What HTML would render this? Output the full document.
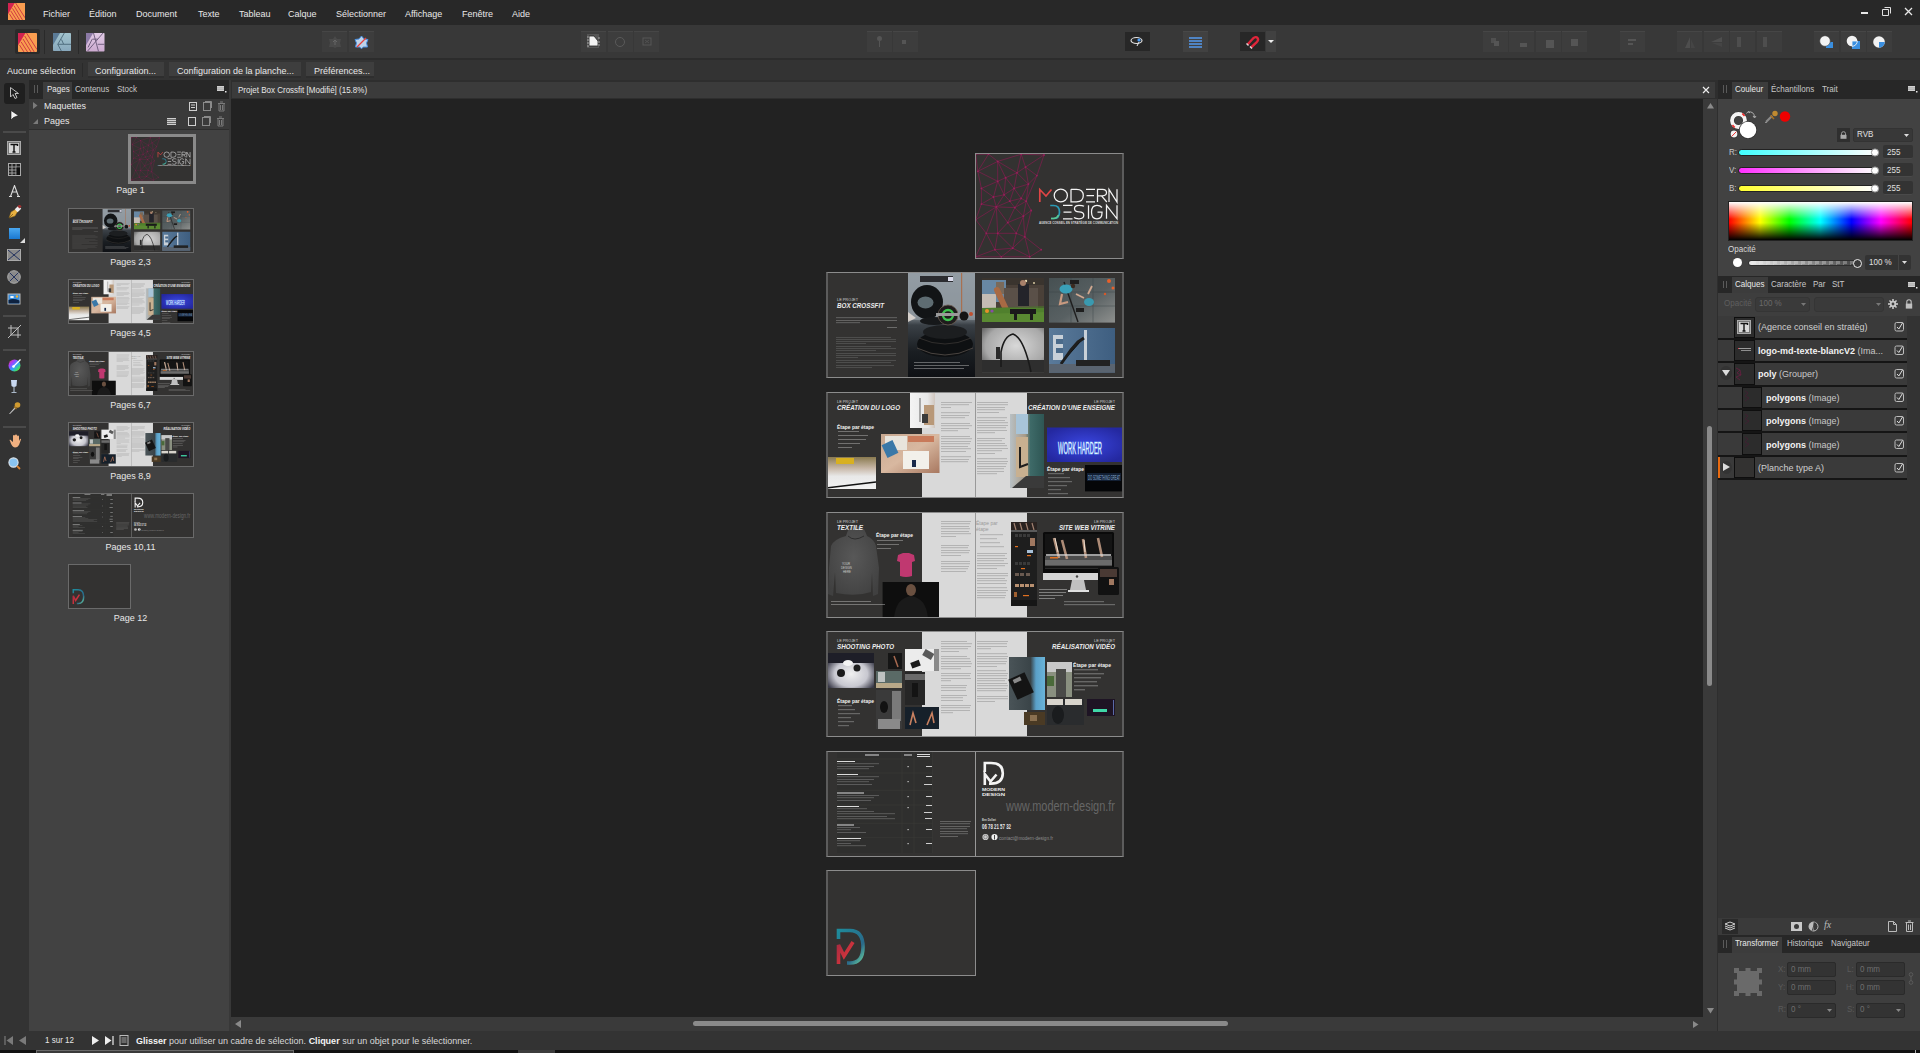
<!DOCTYPE html>
<html><head><meta charset="utf-8">
<style>
*{margin:0;padding:0;box-sizing:border-box}
html,body{width:1920px;height:1053px;overflow:hidden;background:#2e2e2e;font-family:"Liberation Sans",sans-serif;color:#e6e6e6;font-size:9px}
.a{position:absolute}
.t{position:absolute;white-space:nowrap;line-height:1}
</style></head><body>
<!-- MENUBAR -->
<div class="a" style="left:0;top:0;width:1920px;height:25px;background:#282828"></div>
<svg class="a" style="left:8px;top:3px" width="17" height="17" viewBox="0 0 19 19"><rect width="19" height="19" fill="#f99d50"/><path d="M0 0H7.5L0 12.5Z" fill="#d32350"/><path d="M8.5 0L19 16.5M6.7 3L16.2 19M5 6L13 19M3.2 9L9.6 19M1.5 12L6 19" stroke="#cc3040" stroke-width="1"/></svg>
<div class="t" style="left:43px;top:9.5px;font-size:9px;color:#e8e8e8">Fichier</div>
<div class="t" style="left:89px;top:9.5px;font-size:9px;color:#e8e8e8">Édition</div>
<div class="t" style="left:136px;top:9.5px;font-size:9px;color:#e8e8e8">Document</div>
<div class="t" style="left:198px;top:9.5px;font-size:9px;color:#e8e8e8">Texte</div>
<div class="t" style="left:239px;top:9.5px;font-size:9px;color:#e8e8e8">Tableau</div>
<div class="t" style="left:288px;top:9.5px;font-size:9px;color:#e8e8e8">Calque</div>
<div class="t" style="left:336px;top:9.5px;font-size:9px;color:#e8e8e8">Sélectionner</div>
<div class="t" style="left:405px;top:9.5px;font-size:9px;color:#e8e8e8">Affichage</div>
<div class="t" style="left:462px;top:9.5px;font-size:9px;color:#e8e8e8">Fenêtre</div>
<div class="t" style="left:512px;top:9.5px;font-size:9px;color:#e8e8e8">Aide</div>
<div class="a" style="left:1861px;top:12px;width:7px;height:2px;background:#e8e8e8"></div>
<svg class="a" style="left:1882px;top:7px" width="9" height="9" viewBox="0 0 9 9"><path d="M2.5 .5H8.5V6.5M.5 2.5H6.5V8.5H.5Z" fill="none" stroke="#e0e0e0"/></svg>
<svg class="a" style="left:1904px;top:7px" width="9" height="9" viewBox="0 0 9 9"><path d="M1 1L8 8M8 1L1 8" stroke="#e8e8e8" stroke-width="1.3"/></svg>
<!-- TOOLBAR -->
<div class="a" style="left:0;top:25px;width:1920px;height:35px;background:#383838;border-bottom:2px solid #2c2c2c"></div>
<div class="a" style="left:15px;top:29px;width:25px;height:25px;background:#2a2a2a;border-radius:2px"></div>
<svg class="a" style="left:18px;top:33px" width="19" height="19" viewBox="0 0 19 19"><rect width="19" height="19" rx=".8" fill="#f99d50"/><path d="M0 0H7.5L0 12.5Z" fill="#d32350"/><path d="M8.5 0L19 16.5M6.7 3L16.2 19M5 6L13 19M3.2 9L9.6 19M1.5 12L6 19" stroke="#cc3040" stroke-width=".9"/></svg>
<div class="a" style="left:44px;top:30px;width:1px;height:24px;background:#2a2a2a"></div>
<svg class="a" style="left:52.5px;top:33px" width="18" height="18" viewBox="0 0 18 18"><defs><linearGradient id="dg" x1="0" y1="0" x2="0" y2="1"><stop offset="0" stop-color="#a2c4ce"/><stop offset="1" stop-color="#88a8bc"/></linearGradient></defs><rect width="18" height="18" rx=".8" fill="url(#dg)"/><path d="M0 0H7L0 12Z" fill="#5b7b97"/><path d="M11.3 0L4.8 11.3L8.3 18M8.5 6.5L10.5 11M4.8 11.3H18" stroke="#4a6878" stroke-width=".9" fill="none"/></svg>
<div class="a" style="left:78px;top:30px;width:1px;height:24px;background:#2a2a2a"></div>
<svg class="a" style="left:86px;top:33px" width="18.5" height="18.5" viewBox="0 0 18 18"><defs><linearGradient id="pg" x1="0" y1="0" x2="0" y2="1"><stop offset="0" stop-color="#e2cce6"/><stop offset="1" stop-color="#ccaad0"/></linearGradient></defs><rect width="18" height="18" rx=".8" fill="url(#pg)"/><path d="M0 0H7L0 12Z" fill="#8c7aa6"/><path d="M7.3 0L12.2 18M16.6 0L1.6 17.5M6.3 6H11.5M11.3 11H18M2 14L6 6" stroke="#6a5a7a" stroke-width=".9" fill="none"/></svg>
<div class="a" style="left:322px;top:31px;width:25px;height:21px;background:#3d3d3d;border-top:1px solid #464646"></div>
<div class="a" style="left:349px;top:31px;width:25px;height:21px;background:#3d3d3d;border-top:1px solid #464646"></div>
<svg class="a" style="left:328px;top:35px" width="14" height="14" viewBox="0 0 14 14"><path d="M7 1L9 4L13 4L12 8L13 12L9 12L7 13L5 12L1 12L2 8L1 4L5 4Z" fill="#4a4a4a"/><path d="M7 5V10M5 7L7 5L9 7" stroke="#666" stroke-width="1" fill="none"/></svg>
<svg class="a" style="left:354px;top:35px" width="15" height="14" viewBox="0 0 15 14"><path d="M7.5 1L10 4L14 4.5L12.5 8L13.5 12L9.5 12L7.5 13.5L5.5 12L1.5 12L2.5 8L1 4.5L5 4Z" fill="#bdd3ea" stroke="#4a90e2" stroke-width="1"/><path d="M3 12L12 3" stroke="#e8403a" stroke-width="1.3"/></svg>
<!-- group 2 -->
<div class="a" style="left:581px;top:31px;width:25px;height:21px;background:#3d3d3d;border-top:1px solid #464646"></div>
<div class="a" style="left:608px;top:31px;width:25px;height:21px;background:#3d3d3d;border-top:1px solid #464646"></div>
<div class="a" style="left:634px;top:31px;width:25px;height:21px;background:#3d3d3d;border-top:1px solid #464646"></div>
<svg class="a" style="left:587px;top:34px" width="14" height="15" viewBox="0 0 14 15"><rect x="0" y="0" width="12" height="14" fill="#555"/><path d="M2 2H7L11 7V12H2Z" fill="#f2f2f2" stroke="#222" stroke-width=".8"/><path d="M0 3H2M0 6H2M0 9H2M0 12H2M11 4H13M11 8H13M11 11H13" stroke="#bbb" stroke-width=".8"/></svg>
<svg class="a" style="left:613px;top:35px" width="14" height="14" viewBox="0 0 14 14"><circle cx="7" cy="7" r="4.5" fill="none" stroke="#5a5a5a" stroke-width="1"/></svg>
<svg class="a" style="left:642px;top:37px" width="10" height="10" viewBox="0 0 10 10"><rect x="1" y="1" width="8" height="7" fill="none" stroke="#575757"/><path d="M3 3L7 6M7 3L3 6" stroke="#575757" stroke-width=".8"/></svg>
<div class="a" style="left:867px;top:31px;width:25px;height:21px;background:#3d3d3d;border-top:1px solid #464646"></div>
<div class="a" style="left:893px;top:31px;width:25px;height:21px;background:#3d3d3d;border-top:1px solid #464646"></div>
<svg class="a" style="left:875px;top:35px" width="9" height="13" viewBox="0 0 9 13"><circle cx="4.5" cy="3.5" r="2.5" fill="#555"/><path d="M4.5 6V12" stroke="#555" stroke-width="1"/></svg>
<div class="a" style="left:902px;top:40px;width:4px;height:4px;background:#555"></div>
<!-- group 3 -->
<div class="a" style="left:1125px;top:32px;width:25px;height:19px;background:#272727"></div>
<svg class="a" style="left:1130px;top:36px" width="15" height="11" viewBox="0 0 15 11"><ellipse cx="6.5" cy="4.5" rx="5.5" ry="3" fill="none" stroke="#e6e6e6" stroke-width="1.1"/><circle cx="9" cy="4" r="1.6" fill="#4aa0ff"/><path d="M7 10L9 6" stroke="#e6e6e6" stroke-width="1"/></svg>
<div class="a" style="left:1183px;top:31px;width:25px;height:21px;background:#414141;border-top:1px solid #484848"></div>
<div class="a" style="left:1189px;top:37px;width:13px;height:2px;background:#4f84c4"></div>
<div class="a" style="left:1189px;top:40px;width:13px;height:2px;background:#4f84c4"></div>
<div class="a" style="left:1189px;top:43px;width:13px;height:2px;background:#4f84c4"></div>
<div class="a" style="left:1189px;top:46px;width:13px;height:2px;background:#4f84c4"></div>
<div class="a" style="left:1240px;top:32px;width:25px;height:19px;background:#272727"></div>
<svg class="a" style="left:1245px;top:35px" width="15" height="14" viewBox="0 0 15 14"><path d="M2.5 9.5L8 3.5Q11 1 12.5 3Q14 5 11.5 7.5L6 12.5" fill="none" stroke="#e0253a" stroke-width="2.4"/><path d="M1.5 8.5L3.5 10.5M5 11.5L7 13.5" stroke="#ddd" stroke-width="1.4"/></svg>
<div class="a" style="left:1266px;top:31px;width:10px;height:21px;background:#414141"></div>
<svg class="a" style="left:1268px;top:40px" width="6" height="4" viewBox="0 0 6 4"><path d="M0 0H6L3 3Z" fill="#eee"/></svg>
<!-- group 4 -->
<div class="a" style="left:1483px;top:31px;width:25px;height:21px;background:#3d3d3d;border-top:1px solid #464646"></div>
<div class="a" style="left:1509px;top:31px;width:25px;height:21px;background:#3d3d3d;border-top:1px solid #464646"></div>
<div class="a" style="left:1536px;top:31px;width:25px;height:21px;background:#3d3d3d;border-top:1px solid #464646"></div>
<div class="a" style="left:1562px;top:31px;width:25px;height:21px;background:#3d3d3d;border-top:1px solid #464646"></div>
<div class="a" style="left:1491px;top:38px;width:5px;height:5px;background:#505050"></div>
<div class="a" style="left:1494px;top:41px;width:5px;height:5px;background:#555"></div>
<div class="a" style="left:1520px;top:43px;width:7px;height:4px;background:#555"></div>
<div class="a" style="left:1546px;top:40px;width:8px;height:8px;background:#555"></div>
<div class="a" style="left:1571px;top:39px;width:7px;height:7px;background:#555"></div>
<div class="a" style="left:1620px;top:31px;width:25px;height:21px;background:#3d3d3d;border-top:1px solid #464646"></div>
<div class="a" style="left:1628px;top:39px;width:8px;height:2px;background:#555"></div>
<div class="a" style="left:1628px;top:43px;width:5px;height:2px;background:#555"></div>
<div class="a" style="left:1677px;top:31px;width:25px;height:21px;background:#3d3d3d;border-top:1px solid #464646"></div>
<div class="a" style="left:1704px;top:31px;width:25px;height:21px;background:#3d3d3d;border-top:1px solid #464646"></div>
<div class="a" style="left:1730px;top:31px;width:25px;height:21px;background:#3d3d3d;border-top:1px solid #464646"></div>
<div class="a" style="left:1757px;top:31px;width:25px;height:21px;background:#3d3d3d;border-top:1px solid #464646"></div>
<svg class="a" style="left:1684px;top:36px" width="12" height="13" viewBox="0 0 12 13"><path d="M6 1V12H1Z" fill="#4e4e4e"/><path d="M7 3L11 12H7Z" fill="#454545"/></svg>
<svg class="a" style="left:1710px;top:36px" width="13" height="12" viewBox="0 0 13 12"><path d="M12 1V6H1Z" fill="#4e4e4e"/><path d="M12 7V11L2 7Z" fill="#454545"/></svg>
<div class="a" style="left:1737px;top:37px;width:4px;height:10px;background:#4e4e4e"></div>
<div class="a" style="left:1763px;top:37px;width:4px;height:10px;background:#4e4e4e"></div>
<div class="a" style="left:1814px;top:31px;width:25px;height:21px;background:#3d3d3d;border-top:1px solid #464646"></div>
<div class="a" style="left:1841px;top:31px;width:25px;height:21px;background:#3d3d3d;border-top:1px solid #464646"></div>
<div class="a" style="left:1867px;top:31px;width:25px;height:21px;background:#3d3d3d;border-top:1px solid #464646"></div>
<svg class="a" style="left:1819px;top:35px" width="15" height="14" viewBox="0 0 15 14"><path d="M9 7H14V13H7V10" fill="#3a8fe0"/><circle cx="6" cy="6" r="5.3" fill="#f2f2f2" stroke="#3d3d3d" stroke-width=".6"/></svg>
<svg class="a" style="left:1846px;top:35px" width="15" height="14" viewBox="0 0 15 14"><rect x="6" y="6" width="8" height="8" fill="#3a8fe0"/><circle cx="6" cy="6" r="5.3" fill="#f2f2f2"/><path d="M6 6H11.3A5.3 5.3 0 0 1 6 11.3Z" fill="#3a8fe0" stroke="#f2f2f2" stroke-width=".8"/></svg>
<svg class="a" style="left:1872px;top:35px" width="15" height="14" viewBox="0 0 15 14"><circle cx="7" cy="7" r="5.8" fill="#f2f2f2"/><path d="M7 7H12.8A5.8 5.8 0 0 1 7 12.8Z" fill="#3a8fe0"/></svg>
<!-- CONTEXT BAR -->
<div class="a" style="left:0;top:60px;width:1920px;height:20px;background:#333333"></div>
<div class="t" style="left:7px;top:67px;font-size:9px;color:#e8e8e8">Aucune sélection</div>
<div class="a" style="left:82px;top:63px;width:1px;height:14px;background:#2a2a2a"></div>
<div class="a" style="left:88px;top:62px;width:76px;height:16px;background:#3e3e3e;border-bottom:2px solid #2e2e2e"></div>
<div class="t" style="left:95px;top:67px;font-size:9px;color:#e8e8e8">Configuration...</div>
<div class="a" style="left:169px;top:62px;width:132px;height:16px;background:#3e3e3e;border-bottom:2px solid #2e2e2e"></div>
<div class="t" style="left:177px;top:67px;font-size:9px;color:#e8e8e8">Configuration de la planche...</div>
<div class="a" style="left:306px;top:62px;width:68px;height:16px;background:#3e3e3e;border-bottom:2px solid #2e2e2e"></div>
<div class="t" style="left:314px;top:67px;font-size:9px;color:#e8e8e8">Préférences...</div>
<!-- LEFT TOOLS -->
<div class="a" style="left:0;top:80px;width:29px;height:951px;background:#333333"></div>
<div class="a" style="left:4px;top:83px;width:21px;height:21px;background:#1f1f1f;border-radius:3px"></div>
<svg class="a" style="left:9px;top:86px" width="11" height="14" viewBox="0 0 11 14"><path d="M1.5 1.5V11L4 8.5L6 12.5L8 11.5L6 7.5H9.5Z" fill="#1f1f1f" stroke="#bdbdbd" stroke-width="1"/></svg>
<svg class="a" style="left:10px;top:110px" width="9" height="11" viewBox="0 0 9 11"><path d="M1 .5V10L3.5 7.5L8.5 5.5Z" fill="#f2f2f2" stroke="#111" stroke-width=".6"/></svg>
<div class="a" style="left:3px;top:131px;width:23px;height:2px;background:#4a4a4a"></div>
<svg class="a" style="left:7px;top:141px" width="14" height="14" viewBox="0 0 14 14"><rect x=".5" y=".5" width="13" height="13" fill="#777" stroke="#aaa"/><rect x="2" y="2" width="10" height="10" fill="#d8d8d8"/><path d="M3.5 3.5H10.5V5M7 3.5V11M5.5 11H8.5" stroke="#111" stroke-width="1.4" fill="none"/></svg>
<svg class="a" style="left:8px;top:163px" width="13" height="13" viewBox="0 0 13 13"><rect x=".5" y=".5" width="12" height="12" fill="#222" stroke="#aaa"/><path d="M.5 4H12.5M.5 7H12.5M.5 10H12.5M4 .5V12.5M8 .5V12.5" stroke="#aaa" stroke-width=".9"/><rect x="8.5" y="4.5" width="3.5" height="7.5" fill="#111"/></svg>
<svg class="a" style="left:8px;top:185px" width="13" height="12" viewBox="0 0 13 12"><path d="M1 11.5H4M9 11.5H12M2.5 11.5L6.5 .5L10.5 11.5M4.3 7H8.7" stroke="#dcdcdc" stroke-width="1.1" fill="none"/></svg>
<svg class="a" style="left:8px;top:205px" width="14" height="14" viewBox="0 0 14 14"><path d="M1 13L3 7L8 4L10 6L7 11Z" fill="#e8b040" stroke="#8a6a20" stroke-width=".5"/><path d="M1 13L5 9" stroke="#5a4010" stroke-width=".6"/><rect x="8" y="1.5" width="4" height="5" fill="#eee" transform="rotate(45 10 4)"/><rect x="10" y="0" width="3" height="3" fill="#a03030" transform="rotate(45 11.5 1.5)"/></svg>
<div class="a" style="left:9px;top:228px;width:11px;height:11px;background:linear-gradient(#4aa8f0,#1a78d0)"></div>
<svg class="a" style="left:20px;top:238px" width="5" height="5" viewBox="0 0 5 5"><path d="M0 5L5 0V5Z" fill="#ddd"/></svg>
<svg class="a" style="left:7px;top:249px" width="14" height="12" viewBox="0 0 14 12"><rect x=".5" y=".5" width="13" height="11" fill="#8a8a8a" stroke="#aaa"/><path d="M1 1L13 11M13 1L1 11" stroke="#1a2a5a" stroke-width=".9"/></svg>
<svg class="a" style="left:7px;top:270px" width="14" height="14" viewBox="0 0 14 14"><circle cx="7" cy="7" r="6.3" fill="#8a8a8a" stroke="#aaa"/><path d="M2.5 2.5L11.5 11.5M11.5 2.5L2.5 11.5" stroke="#1a2a5a" stroke-width=".9"/></svg>
<svg class="a" style="left:7px;top:293px" width="14" height="12" viewBox="0 0 14 12"><rect x=".5" y=".5" width="13" height="11" fill="#b8b8b8"/><rect x="1.5" y="1.5" width="11" height="9" fill="#3a90e0"/><path d="M1.5 7Q6 5 12.5 7.5V10.5H1.5Z" fill="#0e2240"/><circle cx="10" cy="3.5" r="1.2" fill="#f0b030"/><ellipse cx="5" cy="4" rx="2" ry="1" fill="#fff"/></svg>
<div class="a" style="left:3px;top:315px;width:23px;height:2px;background:#4a4a4a"></div>
<svg class="a" style="left:8px;top:325px" width="13" height="13" viewBox="0 0 13 13"><path d="M3 0V10H13M0 3H10V13M0 13L13 0" stroke="#bdbdbd" stroke-width="1" fill="none"/></svg>
<div class="a" style="left:3px;top:349px;width:23px;height:2px;background:#4a4a4a"></div>
<svg class="a" style="left:8px;top:358px" width="14" height="14" viewBox="0 0 14 14"><defs><linearGradient id="cw1" x1="0" y1="0" x2="1" y2="1"><stop offset="0" stop-color="#ff3a6a"/><stop offset=".3" stop-color="#a040ff"/><stop offset=".55" stop-color="#30a0ff"/><stop offset=".8" stop-color="#40e060"/><stop offset="1" stop-color="#ffd040"/></linearGradient></defs><circle cx="6.5" cy="7.5" r="6" fill="url(#cw1)"/><path d="M5 9L12.5 1.5" stroke="#fff" stroke-width="1.2"/><circle cx="5.5" cy="8.5" r="1.3" fill="#fff"/></svg>
<svg class="a" style="left:10px;top:379px" width="8" height="15" viewBox="0 0 8 15"><path d="M1 1H7L6.5 7Q4 9 1.5 7Z" fill="#c8d8f0"/><path d="M4 8V13M1.5 13.5H6.5" stroke="#aab8c8" stroke-width="1.1"/></svg>
<svg class="a" style="left:8px;top:401px" width="13" height="14" viewBox="0 0 13 14"><path d="M1 13L7 6L8 7L2 13Z" fill="#c8c8c8"/><circle cx="9.5" cy="4" r="2.8" fill="#d09a30"/><path d="M6 5.5L8.5 8" stroke="#a07020" stroke-width="1.5"/></svg>
<div class="a" style="left:3px;top:426px;width:23px;height:2px;background:#4a4a4a"></div>
<svg class="a" style="left:8px;top:434px" width="13" height="14" viewBox="0 0 13 14"><path d="M2 7Q1 6 2 5.5L5 8V2Q5 1 6 1Q7 1 7 2V6V1.5Q7 .5 8 .5Q9 .5 9 1.5V6V2.5Q9 1.5 10 1.5Q11 1.5 11 2.5V7L12 5Q12.8 4.5 13 5.5L11 11Q9.5 13.5 7 13.5Q4 13.5 2 7Z" fill="#f0b080"/></svg>
<svg class="a" style="left:8px;top:457px" width="13" height="13" viewBox="0 0 13 13"><circle cx="5.5" cy="5.5" r="4.6" fill="#8ac4f0" stroke="#e0e8f0" stroke-width="1.1"/><path d="M9 9L12 12" stroke="#d88030" stroke-width="1.8"/></svg>

<!-- LEFT PANEL -->
<div class="a" style="left:29px;top:80px;width:201px;height:19px;background:#272727"></div>
<div class="a" style="left:34px;top:85px;width:1px;height:8px;background:#5a5a5a"></div>
<div class="a" style="left:37px;top:85px;width:1px;height:8px;background:#5a5a5a"></div>
<div class="a" style="left:43px;top:82px;width:29px;height:17px;background:#3c3c3c"></div>
<div class="t" style="left:47px;top:85px;font-size:9px;transform:scaleX(.89);transform-origin:0 0;color:#e8e8e8">Pages</div>
<div class="t" style="left:75px;top:85px;font-size:9px;transform:scaleX(.89);transform-origin:0 0;color:#c8c8c8">Contenus</div>
<div class="t" style="left:117px;top:85px;font-size:9px;transform:scaleX(.89);transform-origin:0 0;color:#c8c8c8">Stock</div>
<svg class="a" style="left:217px;top:85px" width="10" height="8" viewBox="0 0 10 8"><rect x="0" y="1" width="7" height="5" fill="#d0d0d0"/><path d="M0 2.8H7M0 4.3H7" stroke="#8a8a8a" stroke-width=".5"/><rect x="8" y="6" width="1.5" height="1.5" fill="#e8e8e8"/></svg>
<div class="a" style="left:29px;top:99px;width:201px;height:31px;background:#3a3a3a"></div>
<div class="a" style="left:29px;top:129px;width:201px;height:1px;background:#2e2e2e"></div>
<svg class="a" style="left:33px;top:102px" width="5" height="7" viewBox="0 0 5 7"><path d="M0 0L4.5 3.5L0 7Z" fill="#7a7a7a"/></svg>
<svg class="a" style="left:33px;top:119px" width="5" height="5" viewBox="0 0 5 5"><path d="M5 0V5H0Z" fill="#7a7a7a"/></svg>
<div class="t" style="left:44px;top:102px;font-size:9px;color:#e8e8e8">Maquettes</div>
<div class="t" style="left:44px;top:117px;font-size:9px;color:#e8e8e8">Pages</div>
<svg class="a" style="left:188px;top:100px" width="40" height="13" viewBox="0 0 40 13"><rect x="1.5" y="2.5" width="7" height="8" fill="none" stroke="#cfcfcf"/><path d="M3 5H7M3 7.5H7" stroke="#cfcfcf"/><rect x="15.5" y="2.5" width="7" height="8" fill="none" stroke="#8a8a8a"/><path d="M17 1.5H23.5V8" stroke="#8a8a8a" fill="none"/><path d="M30 3.5H37M31 4V11H36V4M32 2H35M32.5 5V10M34.5 5V10" stroke="#7a7a7a" fill="none"/></svg>
<svg class="a" style="left:166px;top:115px" width="61" height="13" viewBox="0 0 61 13"><rect x="1" y="3" width="9" height="7" fill="#cfcfcf"/><path d="M1 4.5H10M1 6.5H10M1 8.5H10" stroke="#444" stroke-width=".7"/><rect x="22.5" y="2.5" width="7" height="8" fill="none" stroke="#cfcfcf"/><rect x="36.5" y="2.5" width="7" height="8" fill="none" stroke="#8a8a8a"/><path d="M38 1.5H44.5V8" stroke="#8a8a8a" fill="none"/><path d="M51 3.5H58M52 4V11H57V4M53 2H56M53.5 5V10M55.5 5V10" stroke="#7a7a7a" fill="none"/></svg>
<div class="a" style="left:29px;top:130px;width:200px;height:901px;background:#424242"></div>
<div class="a" style="left:229px;top:80px;width:2px;height:951px;background:#383838"></div>
<!-- thumbnails -->
<div class="a" style="left:128px;top:134px;width:68px;height:50px;border:3px solid #8a8a8a;background:#333231"></div>
<svg class="a" style="left:131px;top:137px" width="62" height="44" viewBox="0 0 149 106" preserveAspectRatio="none"><use href="#p1" width="149" height="106"/></svg>
<div class="t" style="left:80.5px;width:100px;text-align:center;top:186px;font-size:9px;color:#e8e8e8">Page 1</div>
<svg class="a" style="left:68px;top:208px" width="126" height="45" viewBox="0 0 298 106" preserveAspectRatio="none"><use href="#s23" width="298" height="106"/></svg>
<div class="a" style="left:68px;top:208px;width:126px;height:45px;border:1px solid #6a6a6a"></div>
<div class="t" style="left:80.5px;width:100px;text-align:center;top:258px;font-size:9px;color:#e8e8e8">Pages 2,3</div>
<svg class="a" style="left:68px;top:279px" width="126" height="45" viewBox="0 0 298 106" preserveAspectRatio="none"><use href="#s45" width="298" height="106"/></svg>
<div class="a" style="left:68px;top:279px;width:126px;height:45px;border:1px solid #6a6a6a"></div>
<div class="t" style="left:80.5px;width:100px;text-align:center;top:329px;font-size:9px;color:#e8e8e8">Pages 4,5</div>
<svg class="a" style="left:68px;top:351px" width="126" height="45" viewBox="0 0 298 106" preserveAspectRatio="none"><use href="#s67" width="298" height="106"/></svg>
<div class="a" style="left:68px;top:351px;width:126px;height:45px;border:1px solid #6a6a6a"></div>
<div class="t" style="left:80.5px;width:100px;text-align:center;top:401px;font-size:9px;color:#e8e8e8">Pages 6,7</div>
<svg class="a" style="left:68px;top:422px" width="126" height="45" viewBox="0 0 298 106" preserveAspectRatio="none"><use href="#s89" width="298" height="106"/></svg>
<div class="a" style="left:68px;top:422px;width:126px;height:45px;border:1px solid #6a6a6a"></div>
<div class="t" style="left:80.5px;width:100px;text-align:center;top:472px;font-size:9px;color:#e8e8e8">Pages 8,9</div>
<svg class="a" style="left:68px;top:493px" width="126" height="45" viewBox="0 0 298 106" preserveAspectRatio="none"><use href="#s1011" width="298" height="106"/></svg>
<div class="a" style="left:68px;top:493px;width:126px;height:45px;border:1px solid #6a6a6a"></div>
<div class="t" style="left:80.5px;width:100px;text-align:center;top:543px;font-size:9px;color:#e8e8e8">Pages 10,11</div>
<svg class="a" style="left:68px;top:564px" width="63" height="45" viewBox="0 0 149 106" preserveAspectRatio="none"><use href="#p12" width="149" height="106"/></svg>
<div class="a" style="left:68px;top:564px;width:63px;height:45px;border:1px solid #6a6a6a"></div>
<div class="t" style="left:80.5px;width:100px;text-align:center;top:614px;font-size:9px;color:#e8e8e8">Page 12</div>
<!-- CANVAS AREA -->
<div class="a" style="left:231px;top:81px;width:1485px;height:18px;background:#2e2e2e"></div>
<div class="a" style="left:232px;top:82px;width:1483px;height:16px;background:#3b3b3b"></div>
<div class="t" style="left:238px;top:86px;font-size:9px;transform:scaleX(.89);transform-origin:0 0;color:#e6e6e6">Projet Box Crossfit [Modifié] (15.8%)</div>
<svg class="a" style="left:1702px;top:86px" width="8" height="8" viewBox="0 0 8 8"><path d="M1 1L7 7M7 1L1 7" stroke="#eee" stroke-width="1.2"/></svg>
<div class="a" style="left:231px;top:99px;width:1472px;height:918px;background:#222222"></div>
<!-- vertical scrollbar -->
<div class="a" style="left:1703px;top:99px;width:14px;height:918px;background:#3a3a3a"></div>
<svg class="a" style="left:1707px;top:103px" width="7" height="6" viewBox="0 0 7 6"><path d="M0 5.5L3.5 0L7 5.5Z" fill="#8a8a8a"/></svg>
<svg class="a" style="left:1707px;top:1008px" width="7" height="6" viewBox="0 0 7 6"><path d="M0 0L3.5 5.5L7 0Z" fill="#8a8a8a"/></svg>
<div class="a" style="left:1707px;top:426px;width:5px;height:260px;background:#8a8a8a;border-radius:3px"></div>
<!-- horizontal scrollbar -->
<div class="a" style="left:231px;top:1017px;width:1486px;height:14px;background:#3a3a3a"></div>
<svg class="a" style="left:235px;top:1020px" width="6" height="8" viewBox="0 0 6 8"><path d="M6 0L0 4L6 8Z" fill="#8a8a8a"/></svg>
<svg class="a" style="left:1693px;top:1021px" width="6" height="7" viewBox="0 0 6 7"><path d="M0 0L5.5 3.5L0 7Z" fill="#8a8a8a"/></svg>
<div class="a" style="left:693px;top:1021px;width:535px;height:5px;background:#8a8a8a;border-radius:3px"></div>


<svg width="0" height="0" style="position:absolute">
<defs>
<linearGradient id="gTire" x1="0" y1="0" x2="0" y2="1"><stop offset="0" stop-color="#8a949c"/><stop offset=".42" stop-color="#7a8288"/><stop offset=".5" stop-color="#3a4046"/><stop offset=".75" stop-color="#1a1e22"/><stop offset="1" stop-color="#0e1014"/></linearGradient>
<linearGradient id="gSled" x1="0" y1="0" x2="0" y2="1"><stop offset="0" stop-color="#6a7078"/><stop offset=".55" stop-color="#6a5a48"/><stop offset=".7" stop-color="#4d6a30"/><stop offset="1" stop-color="#3e5a22"/></linearGradient>
<linearGradient id="gFloor" x1="0" y1="0" x2="1" y2="1"><stop offset="0" stop-color="#465052"/><stop offset=".55" stop-color="#586062"/><stop offset="1" stop-color="#8e908e"/></linearGradient>
<radialGradient id="gRope" cx=".55" cy=".4" r=".7"><stop offset="0" stop-color="#d8d8d8"/><stop offset=".7" stop-color="#a8a8a8"/><stop offset="1" stop-color="#5a5a5a"/></radialGradient>
<linearGradient id="gBlue" x1="0" y1="0" x2="1" y2="0"><stop offset="0" stop-color="#5a7a9a"/><stop offset="1" stop-color="#3e5e80"/></linearGradient>
<linearGradient id="gLamp" x1="0" y1="0" x2="1" y2="0"><stop offset="0" stop-color="#f4f4f4"/><stop offset=".7" stop-color="#e8e8e8"/><stop offset="1" stop-color="#d0c6be"/></linearGradient>
<linearGradient id="gDesk" x1="0" y1="0" x2="1" y2="1"><stop offset="0" stop-color="#c8a890"/><stop offset=".5" stop-color="#d8b8a0"/><stop offset="1" stop-color="#a87860"/></linearGradient>
<linearGradient id="gHand" x1="0" y1="0" x2="0" y2="1"><stop offset="0" stop-color="#8a7a50"/><stop offset=".35" stop-color="#c8b8a8"/><stop offset=".6" stop-color="#e8e8e8"/><stop offset="1" stop-color="#f2f2f2"/></linearGradient>
<linearGradient id="gAlley" x1="0" y1="0" x2="1" y2="0"><stop offset="0" stop-color="#b8c0c4"/><stop offset=".45" stop-color="#a89a86"/><stop offset=".6" stop-color="#3e6a68"/><stop offset="1" stop-color="#2e5654"/></linearGradient>
<radialGradient id="gNeon" cx=".5" cy=".5" r=".6"><stop offset="0" stop-color="#3a46e0"/><stop offset="1" stop-color="#2428a0"/></radialGradient>
<radialGradient id="gHood" cx=".5" cy=".45" r=".65"><stop offset="0" stop-color="#585858"/><stop offset="1" stop-color="#404040"/></radialGradient>
<radialGradient id="gStudio" cx=".5" cy=".6" r=".6"><stop offset="0" stop-color="#f0f0f0"/><stop offset=".6" stop-color="#c8c8d0"/><stop offset="1" stop-color="#3a3a48"/></radialGradient>
<linearGradient id="gCam" x1="0" y1="0" x2="1" y2="0"><stop offset="0" stop-color="#4a5458"/><stop offset=".6" stop-color="#3a4448"/><stop offset=".75" stop-color="#5aa0c8"/><stop offset="1" stop-color="#6ab4d8"/></linearGradient>
<linearGradient id="gLogoD" x1="0" y1="0" x2="1" y2="1"><stop offset="0" stop-color="#1e8a9a"/><stop offset=".7" stop-color="#2a6a8a"/><stop offset="1" stop-color="#6ad0a0"/></linearGradient>
<linearGradient id="gLogoM" x1="0" y1="0" x2="1" y2="1"><stop offset="0" stop-color="#a82a40"/><stop offset="1" stop-color="#e83a3a"/></linearGradient>

<symbol id="p1" viewBox="0 0 149 106">
<rect width="149" height="106" fill="#333231"/>
<path d="M19.9 96.7L26.3 103.8M11.3 80.3L19.9 96.7M21.3 53.9L11.3 80.3M29.1 41.8L21.3 53.9M2.8 18.3L13.5 1.2M21.3 53.9L34.8 48.2M39.1 35.4L53.4 31.1M22.7 8.4L22.7 28.3M42.0 19.8L50.5 14.1M22.7 80.3L37.7 95.2M2.8 18.3L6.4 35.4M34.8 48.2L46.2 45.4M22.7 28.3L18.5 44.0M49.8 83.8L37.7 95.2M39.8 54.6L32.7 69.6M48.4 63.2L41.3 80.3M37.7 95.2L54.8 103.8M34.8 48.2L39.8 54.6M46.2 45.4L51.2 48.2M49.8 83.8L54.8 103.8M18.5 44.0L6.4 51.1M11.3 80.3L22.7 80.3M22.7 8.4L42.0 19.8M6.4 51.1L21.3 53.9M22.7 80.3L41.3 80.3M21.3 53.9L32.7 69.6M39.1 35.4L46.2 45.4M56.2 57.5L48.4 63.2M53.4 31.1L51.2 48.2M41.3 80.3L49.8 83.8M53.4 31.1L61.9 22.6M2.8 18.3L0.7 1.2M48.4 63.2L32.7 69.6M22.7 80.3L19.9 96.7M21.3 53.9L22.7 80.3M6.4 35.4L6.4 51.1M2.8 18.3L22.7 28.3M42.0 19.8L46.2 1.2M26.3 103.8L0.7 103.8M22.7 28.3L29.1 41.8M19.9 96.7L37.7 95.2M30.6 24.7L22.7 28.3M50.5 14.1L46.2 1.2M51.2 48.2L39.8 54.6M49.8 83.8L66.2 96.7M30.6 24.7L39.1 35.4M69.0 2.0L46.2 1.2M48.4 63.2L49.8 83.8M32.7 69.6L41.3 80.3M21.3 53.9L39.8 54.6M51.2 48.2L48.4 63.2M50.5 14.1L61.9 22.6M11.3 80.3L0.7 66.7M37.7 95.2L26.3 103.8M42.0 19.8L53.4 31.1M66.2 96.7L54.8 103.8M6.4 51.1L0.7 66.7M18.5 44.0L21.3 53.9M30.6 24.7L29.1 41.8M54.8 103.8L26.3 103.8M50.5 14.1L53.4 31.1M19.9 96.7L0.7 103.8M22.7 8.4L46.2 1.2M42.0 19.8L30.6 24.7M53.4 31.1L46.2 45.4M29.1 41.8L34.8 48.2M22.7 8.4L13.5 1.2M41.3 80.3L37.7 95.2M39.8 54.6L48.4 63.2M6.4 35.4L18.5 44.0M39.1 35.4L29.1 41.8M21.3 53.9L0.7 66.7M0.7 1.2L13.5 1.2M50.5 14.1L69.0 2.0M22.7 8.4L2.8 18.3M11.3 80.3L0.7 103.8M51.2 48.2L61.9 22.6M46.2 45.4L39.8 54.6M32.7 69.6L22.7 80.3M22.7 8.4L30.6 24.7M51.2 48.2L56.2 57.5M39.1 35.4L34.8 48.2M29.1 41.8L18.5 44.0M42.0 19.8L39.1 35.4M56.2 57.5L49.8 83.8M69.0 2.0L61.9 22.6M22.7 28.3L6.4 35.4" stroke="#8a1b51" stroke-width=".65" fill="none"/>
<g fill="#9a1f5c"><circle cx="22.7" cy="8.4" r=".9"/><circle cx="2.8" cy="18.3" r=".9"/><circle cx="42.0" cy="19.8" r=".9"/><circle cx="30.6" cy="24.7" r=".9"/><circle cx="50.5" cy="14.1" r=".9"/><circle cx="69.0" cy="2.0" r=".9"/><circle cx="46.2" cy="1.2" r=".9"/><circle cx="22.7" cy="28.3" r=".9"/><circle cx="6.4" cy="35.4" r=".9"/><circle cx="39.1" cy="35.4" r=".9"/><circle cx="53.4" cy="31.1" r=".9"/><circle cx="29.1" cy="41.8" r=".9"/><circle cx="18.5" cy="44.0" r=".9"/><circle cx="6.4" cy="51.1" r=".9"/><circle cx="21.3" cy="53.9" r=".9"/><circle cx="34.8" cy="48.2" r=".9"/><circle cx="46.2" cy="45.4" r=".9"/><circle cx="51.2" cy="48.2" r=".9"/><circle cx="39.8" cy="54.6" r=".9"/><circle cx="56.2" cy="57.5" r=".9"/><circle cx="48.4" cy="63.2" r=".9"/><circle cx="32.7" cy="69.6" r=".9"/><circle cx="11.3" cy="80.3" r=".9"/><circle cx="22.7" cy="80.3" r=".9"/><circle cx="41.3" cy="80.3" r=".9"/><circle cx="49.8" cy="83.8" r=".9"/><circle cx="19.9" cy="96.7" r=".9"/><circle cx="37.7" cy="95.2" r=".9"/><circle cx="66.2" cy="96.7" r=".9"/><circle cx="54.8" cy="103.8" r=".9"/><circle cx="26.3" cy="103.8" r=".9"/><circle cx="0.7" cy="103.8" r=".9"/><circle cx="0.7" cy="1.2" r=".9"/><circle cx="13.5" cy="1.2" r=".9"/><circle cx="0.7" cy="66.7" r=".9"/><circle cx="61.9" cy="22.6" r=".9"/></g>
<path d="M64.8 49V36.5L71 43L76.5 36.5" stroke="#e04545" stroke-width="1.7" fill="none"/>
<g stroke="#f4f4f4" stroke-width="1.25" fill="none">
<ellipse cx="85.8" cy="42.5" rx="6.6" ry="6.4"/>
<path d="M96 36.3H101.5Q108.3 36.3 108.3 42.6Q108.3 48.8 101.5 48.8H96V36.3"/>
<path d="M111 36.3H120M111.5 42.5H119M111 48.8H120"/>
<path d="M122.5 49V36.3H127.5Q131.5 36.3 131.5 39.6Q131.5 42.8 127.5 42.8H122.5M126.5 42.8L131.8 49"/>
<path d="M134 49V36.3L142 49V36.3"/>
<path d="M88 52.3H97.5M88.5 59H96.5M88 65.8H97.5"/>
<path d="M109 53.3Q107.5 52.3 104 52.3Q99.5 52.3 99.5 55.6Q99.5 58.9 104 58.9Q108.8 58.9 108.8 62.3Q108.8 65.8 104 65.8Q100.5 65.8 99 64.5"/>
<path d="M113.5 52.3V65.8"/>
<path d="M127 54.5Q125 52.3 122 52.3Q116.5 52.3 116.5 59Q116.5 65.8 122 65.8Q127 65.8 127 60V59.2H122.5"/>
<path d="M131.5 65.8V52.3L142 65.8V52.3"/>
</g>
<path d="M75.2 52.5H78.5Q84.5 52.5 84.5 59Q84.5 65.5 78.5 65.5H76" stroke="#2a9ab5" stroke-width="1.7" fill="none"/>
<path d="M76 65.5H78.5Q82 65.5 83.5 62" stroke="#5cc890" stroke-width="1.7" fill="none"/>
<text x="64" y="70.6" font-family="Liberation Sans" font-size="3" fill="#d8d8d8" textLength="79" lengthAdjust="spacingAndGlyphs" font-weight="bold">AGENCE CONSEIL EN STRATÉGIE DE COMMUNICATION</text>
</symbol>

<symbol id="s23" viewBox="0 0 298 106">
<rect width="298" height="106" fill="#333231"/>
<rect x="82" y="0" width="67" height="106" fill="url(#gTire)"/>
<rect x="82" y="0" width="67" height="48" fill="#9aa4ac" opacity=".55"/>
<rect x="94" y="4" width="33" height="6" fill="#2c2c30"/><rect x="122" y="5" width="5" height="4" fill="#dde"/>
<rect x="135" y="1" width="1.2" height="40" fill="#a87050"/>
<ellipse cx="101" cy="30" rx="16" ry="17" fill="#121416"/><ellipse cx="99.5" cy="30.5" rx="8" ry="6" fill="#5e6c72"/>
<path d="M82 40L90 46L82 50Z" fill="#e8e0d8" opacity=".8"/>
<ellipse cx="108" cy="49" rx="14" ry="4" fill="#16181a"/>
<ellipse cx="119" cy="72" rx="28" ry="13" fill="#0e1012"/><ellipse cx="119" cy="60" rx="22" ry="7" fill="#1c1e20"/><path d="M91 76Q119 90 147 76" stroke="#4a4440" stroke-width="1" fill="none"/><path d="M93 66Q119 78 145 66" stroke="#3a3634" stroke-width=".8" fill="none"/>
<circle cx="122" cy="43" r="10" fill="#1e1c1c"/><circle cx="122" cy="43" r="10" fill="none" stroke="#6a5a50" stroke-width=".8"/><circle cx="122" cy="43" r="5" fill="none" stroke="#3ec050" stroke-width="2.4"/>
<rect x="110" y="41" width="34" height="3" fill="#9a9a9a"/><circle cx="138" cy="44" r="4.5" fill="#141414"/>
<circle cx="145" cy="42" r="2" fill="#c05030"/>
<text x="11" y="29" font-size="3.2" fill="#cfcfcf" font-family="Liberation Sans" textLength="21" lengthAdjust="spacingAndGlyphs">LE PROJET</text>
<text x="11" y="36" font-size="6.5" fill="#ececec" font-family="Liberation Sans" font-weight="bold" font-style="italic" textLength="47" lengthAdjust="spacingAndGlyphs">BOX CROSSFIT</text>
<g fill="#a8a8a8" opacity=".7"><rect x="10" y="45.5" width="61" height=".6"/><rect x="10" y="48" width="61" height=".6"/><rect x="10" y="50.5" width="24" height=".6"/><rect x="61" y="55" width="10" height=".7"/></g>
<g fill="#6e6e6e" opacity=".75"><rect x="10" y="65" width="55" height=".6"/><rect x="10" y="67" width="60" height=".6"/><rect x="10" y="69" width="60" height=".6"/><rect x="10" y="71" width="30" height=".6"/><rect x="10" y="74" width="55" height=".6"/><rect x="10" y="76" width="60" height=".6"/><rect x="10" y="78" width="40" height=".6"/><rect x="10" y="81" width="60" height=".6"/><rect x="10" y="83" width="60" height=".6"/><rect x="10" y="85" width="22" height=".6"/><rect x="10" y="88" width="60" height=".6"/><rect x="10" y="90" width="55" height=".6"/><rect x="10" y="93" width="58" height=".6"/><rect x="10" y="95" width="36" height=".6"/></g>
<g fill="#d0d0d0" opacity=".7"><rect x="88" y="90" width="46" height=".6"/><rect x="88" y="93" width="55" height=".6"/><rect x="88" y="96" width="50" height=".6"/></g>
<rect x="156" y="6" width="62" height="44" fill="#4a4038"/>
<rect x="156" y="6" width="62" height="7" fill="#3a342e"/><circle cx="200" cy="9" r="1.2" fill="#e8d8b0"/><circle cx="208" cy="11" r="1" fill="#d8c8a0"/>
<rect x="156" y="8" width="24" height="22" fill="#6888a4"/><rect x="170" y="10" width="8" height="12" fill="#7a6a5a"/>
<rect x="156" y="22" width="14" height="14" fill="#c4bcb4"/>
<rect x="178" y="16" width="34" height="20" fill="#5a5048"/>
<path d="M171 18L183 44" stroke="#a86a44" stroke-width="6" stroke-linecap="round"/>
<rect x="192" y="12" width="11" height="22" fill="#24242a"/><circle cx="197" cy="11" r="3" fill="#a8806a"/>
<path d="M156 36H218V50H156Z" fill="#5a8a32"/><path d="M156 36L218 34V40L156 42Z" fill="#4a7a2a" opacity=".6"/>
<rect x="184" y="37" width="26" height="5" fill="#1a1a1a"/><rect x="188" y="42" width="3" height="6" fill="#1a1a1a"/><rect x="204" y="42" width="3" height="6" fill="#1a1a1a"/>
<circle cx="161" cy="39" r="2" fill="#e8902a"/><circle cx="166" cy="39" r="1.6" fill="#8a4aa8"/>
<rect x="223" y="6" width="66" height="44.6" fill="url(#gFloor)"/>
<path d="M223 20H289M223 34H289M245 6V50.6M267 6V50.6" stroke="#3a4446" stroke-width=".6" opacity=".7"/>
<path d="M238 10L252 50" stroke="#1e1e1e" stroke-width="1.4"/><rect x="244" y="8" width="9" height="4" fill="#1e1e1e"/><rect x="250" y="36" width="8" height="4" fill="#1e1e1e"/>
<ellipse cx="240" cy="17" rx="6.5" ry="4.5" fill="#3aa0b8"/><circle cx="247" cy="14" r="2.2" fill="#3a2a20"/><path d="M236 22L234 32L242 30" stroke="#c89a80" stroke-width="2.2" fill="none"/>
<ellipse cx="263" cy="30" rx="5" ry="4" fill="#3a9ab0"/><path d="M258 26L250 22M262 22L266 14" stroke="#d0a890" stroke-width="1.8"/>
<circle cx="283" cy="9" r="2" fill="#e8602a"/><circle cx="287" cy="16" r="1.5" fill="#e8602a"/><circle cx="279" cy="22" r="1.2" fill="#d85a2a"/>
<rect x="156" y="56" width="62" height="44.5" fill="url(#gRope)"/><rect x="156" y="88" width="62" height="12.5" fill="#2e2e2e"/>
<path d="M175 95V80Q178 64 187 62Q198 66 205 100" stroke="#1a1a1a" stroke-width="1.6" fill="none"/><rect x="170" y="75" width="4" height="12" fill="#2a2a2a"/>
<rect x="223" y="56" width="66" height="44.7" fill="url(#gBlue)"/><rect x="227" y="63" width="10" height="25" fill="#c8d0d8"/><rect x="230" y="67" width="7" height="5" fill="#4a6a8a"/><rect x="230" y="76" width="7" height="5" fill="#4a6a8a"/><rect x="258" y="58" width="3" height="30" fill="#c8d0d8"/>
<path d="M235 92L245 78L252 70L258 66" stroke="#1e1e1e" stroke-width="3"/><rect x="223" y="92" width="66" height="8.7" fill="#5a6470"/><rect x="250" y="88" width="34" height="6" fill="#222"/>
</symbol>

<symbol id="s45" viewBox="0 0 298 106">
<rect width="298" height="106" fill="#333231"/>
<rect x="96" y="0" width="105" height="106" fill="#d9d9d9"/>
<rect x="84" y="1" width="25" height="35" fill="url(#gLamp)"/><rect x="93" y="6" width="2" height="24" fill="#a8a8a8"/><rect x="98" y="13" width="10" height="20" fill="#b89878"/><rect x="96" y="22" width="6" height="9" fill="#3a3a3a"/>
<rect x="55" y="42" width="58.5" height="39" fill="url(#gDesk)"/><rect x="59" y="44" width="22" height="14" fill="#e8e4dc"/><rect x="58" y="50" width="12" height="14" fill="#3a78a8" transform="rotate(-25 64 57)"/><rect x="77" y="59" width="26" height="18" fill="#f2f0ea"/><rect x="86" y="68" width="4" height="7" fill="#1a2a4a"/><rect x="82" y="44" width="26" height="6" fill="#c87a5a"/>
<rect x="0" y="65" width="50" height="32" fill="url(#gHand)"/><rect x="10" y="66" width="18" height="6" fill="#d8b020"/><path d="M0 96L50 90" stroke="#111" stroke-width="1.4"/>
<text x="11" y="10.5" font-size="3.2" fill="#cfcfcf" font-family="Liberation Sans" textLength="21" lengthAdjust="spacingAndGlyphs">LE PROJET</text>
<text x="11" y="18" font-size="6.5" fill="#ececec" font-family="Liberation Sans" font-weight="bold" font-style="italic" textLength="63" lengthAdjust="spacingAndGlyphs">CRÉATION DU LOGO</text>
<text x="11" y="36.5" font-size="5.6" fill="#f2f2f2" font-family="Liberation Sans" font-weight="bold" textLength="37" lengthAdjust="spacingAndGlyphs">Étape par étape</text>
<g fill="#c0c0c0" opacity=".75"><rect x="12" y="39" width="21" height=".6"/><rect x="12" y="43" width="30" height=".6"/><rect x="12" y="47" width="28" height=".6"/><rect x="12" y="51" width="22" height=".6"/><rect x="12" y="55" width="14" height=".6"/></g>
<g fill="#8a8a8a" opacity=".8"><rect x="115" y="10" width="31" height=".6"/><rect x="115" y="12.5" width="28" height=".6"/><rect x="115" y="15" width="10" height=".6"/><rect x="115" y="20.5" width="29" height=".6"/><rect x="115" y="23" width="28" height=".6"/><rect x="115" y="25.5" width="24" height=".6"/><rect x="115" y="31" width="29" height=".6"/><rect x="115" y="33.5" width="31" height=".6"/><rect x="115" y="36" width="28" height=".6"/><rect x="115" y="38.5" width="17" height=".6"/><rect x="115" y="44" width="29" height=".6"/><rect x="115" y="46.5" width="31" height=".6"/><rect x="115" y="49" width="30" height=".6"/><rect x="115" y="51.5" width="29" height=".6"/><rect x="115" y="54" width="27" height=".6"/><rect x="115" y="56.5" width="30" height=".6"/><rect x="115" y="59" width="25" height=".6"/><rect x="115" y="64.5" width="30" height=".6"/><rect x="115" y="67" width="28" height=".6"/><rect x="115" y="69.5" width="27" height=".6"/></g>
<rect x="149" y="0" width="1" height="106" fill="#999"/>
<g fill="#8a8a8a" opacity=".8"><rect x="151" y="10" width="31" height=".6"/><rect x="151" y="12.5" width="31" height=".6"/><rect x="151" y="15" width="28" height=".6"/><rect x="151" y="17.5" width="28" height=".6"/><rect x="151" y="20" width="22" height=".6"/><rect x="151" y="25.5" width="30" height=".6"/><rect x="151" y="28" width="28" height=".6"/><rect x="151" y="30.5" width="31" height=".6"/><rect x="151" y="33" width="31" height=".6"/><rect x="151" y="35.5" width="29" height=".6"/><rect x="151" y="38" width="30" height=".6"/><rect x="151" y="40.5" width="18" height=".6"/><rect x="151" y="46" width="28" height=".6"/><rect x="151" y="48.5" width="25" height=".6"/><rect x="151" y="51" width="28" height=".6"/><rect x="151" y="53.5" width="30" height=".6"/><rect x="151" y="56" width="31" height=".6"/><rect x="151" y="58.5" width="25" height=".6"/><rect x="151" y="61" width="18" height=".6"/><rect x="151" y="66.5" width="30" height=".6"/><rect x="151" y="69" width="31" height=".6"/><rect x="151" y="71.5" width="30" height=".6"/><rect x="151" y="74" width="29" height=".6"/><rect x="151" y="76.5" width="27" height=".6"/><rect x="151" y="79" width="27" height=".6"/><rect x="151" y="81.5" width="20" height=".6"/></g>
<rect x="201" y="0" width="97" height="106" fill="#333231"/>
<rect x="184" y="22" width="34" height="74" fill="url(#gAlley)"/><rect x="190" y="22" width="12" height="20" fill="#a8c4d8"/><rect x="190" y="45" width="12" height="40" fill="#c8b090"/><path d="M194 55V75L202 72" stroke="#1e1e1e" stroke-width="2" fill="none"/><path d="M186 96L200 84H218V96Z" fill="#3a3a3a"/>
<rect x="221" y="35.5" width="75.6" height="34.5" fill="url(#gNeon)"/>
<text x="232" y="62" font-size="17" fill="none" stroke="#7ab0ff" stroke-width="1.6" opacity=".5" font-family="Liberation Sans" textLength="44" lengthAdjust="spacingAndGlyphs">WORK HARDER</text><text x="232" y="62" font-size="17" fill="#e0f8ff" font-family="Liberation Sans" textLength="44" lengthAdjust="spacingAndGlyphs">WORK HARDER</text>
<rect x="259" y="73" width="37.6" height="26.4" fill="#050608"/><rect x="261" y="81" width="34" height="8" fill="#1a3050" opacity=".6"/><text x="262" y="88" font-size="7" fill="#8ab0d8" font-family="Liberation Sans" textLength="32" lengthAdjust="spacingAndGlyphs">DO SOMETHING GREAT</text>
<text x="289" y="10.5" text-anchor="end" font-size="3.2" fill="#cfcfcf" font-family="Liberation Sans" textLength="21" lengthAdjust="spacingAndGlyphs">LE PROJET</text>
<text x="289" y="18" text-anchor="end" font-size="6.5" fill="#ececec" font-family="Liberation Sans" font-weight="bold" font-style="italic" textLength="87" lengthAdjust="spacingAndGlyphs">CRÉATION D’UNE ENSEIGNE</text>
<text x="221" y="78.5" font-size="5.6" fill="#f2f2f2" font-family="Liberation Sans" font-weight="bold" textLength="37" lengthAdjust="spacingAndGlyphs">Étape par étape</text>
<g fill="#c0c0c0" opacity=".75"><rect x="222" y="81.5" width="16" height=".6"/><rect x="222" y="85.5" width="22" height=".6"/><rect x="222" y="89.5" width="24" height=".6"/><rect x="222" y="93.5" width="19" height=".6"/><rect x="222" y="97.5" width="13" height=".6"/><rect x="222" y="101.5" width="20" height=".6"/></g>
</symbol>

<symbol id="s67" viewBox="0 0 298 106">
<rect width="298" height="106" fill="#333231"/>
<rect x="96" y="0" width="105" height="106" fill="#d9d9d9"/>
<path d="M20 24Q22 16 27 14Q33 13 38 17Q40 21 41 24Q48 27 50 34L53 56L52 82L47 84L46 60L45 80Q30 85 10 81L9 60L7 84L2 82L3 56L5 34Q8 27 20 24Z" fill="url(#gHood)"/><path d="M22 24Q28 30 38 24" stroke="#2e2e2e" stroke-width="1" fill="none"/>
<text x="16" y="53" font-size="2.8" fill="#cfcfcf" font-family="Liberation Sans">YOUR</text><text x="15" y="57" font-size="2.8" fill="#cfcfcf" font-family="Liberation Sans">DESIGN</text><text x="17" y="61" font-size="2.8" fill="#cfcfcf" font-family="Liberation Sans">HERE</text>
<path d="M72 43L77 41H83L88 43L89 49L86 50V64Q80 66 74 64V50L71 49Z" fill="#c03870"/>
<rect x="56.6" y="70" width="56.4" height="36" fill="#0e0e0e"/><ellipse cx="85" cy="78" rx="5" ry="6" fill="#6a5040"/><path d="M68 106Q70 86 85 84Q100 86 102 106Z" fill="#1a1a1a"/>
<text x="11" y="10.5" font-size="3.2" fill="#cfcfcf" font-family="Liberation Sans" textLength="21" lengthAdjust="spacingAndGlyphs">LE PROJET</text>
<text x="11" y="18" font-size="6.5" fill="#ececec" font-family="Liberation Sans" font-weight="bold" font-style="italic" textLength="26" lengthAdjust="spacingAndGlyphs">TEXTILE</text>
<text x="50" y="25" font-size="5.6" fill="#f2f2f2" font-family="Liberation Sans" font-weight="bold" textLength="37" lengthAdjust="spacingAndGlyphs">Étape par étape</text>
<g fill="#c0c0c0" opacity=".75"><rect x="51" y="28" width="26" height=".6"/><rect x="51" y="32" width="22" height=".6"/><rect x="51" y="36" width="14" height=".6"/></g>
<g fill="#d0d0d0" opacity=".7"><rect x="5" y="89" width="40" height=".6"/><rect x="5" y="92" width="54" height=".6"/></g>
<g fill="#8a8a8a" opacity=".8"><rect x="115" y="9" width="30" height=".6"/><rect x="115" y="11.5" width="29" height=".6"/><rect x="115" y="14" width="28" height=".6"/><rect x="115" y="16.5" width="29" height=".6"/><rect x="115" y="19" width="28" height=".6"/><rect x="115" y="21.5" width="30" height=".6"/><rect x="115" y="24" width="15" height=".6"/><rect x="115" y="33" width="28" height=".6"/><rect x="115" y="35.5" width="27" height=".6"/><rect x="115" y="38" width="29" height=".6"/><rect x="115" y="40.5" width="28" height=".6"/><rect x="115" y="43" width="20" height=".6"/><rect x="115" y="49" width="29" height=".6"/><rect x="115" y="51.5" width="29" height=".6"/><rect x="115" y="54" width="28" height=".6"/><rect x="115" y="56.5" width="27" height=".6"/><rect x="115" y="59" width="25" height=".6"/></g>
<rect x="149" y="0" width="1" height="106" fill="#999"/>
<text x="150" y="13" font-size="5" fill="#9a9a9a" font-family="Liberation Sans">Étape par</text><text x="150" y="18.5" font-size="5" fill="#9a9a9a" font-family="Liberation Sans">étape</text>
<g fill="#8a8a8a" opacity=".8"><rect x="154" y="22.5" width="23" height=".6"/><rect x="154" y="26.5" width="17" height=".6"/><rect x="154" y="30.5" width="20" height=".6"/><rect x="154" y="34.5" width="24" height=".6"/><rect x="151" y="41" width="30" height=".6"/><rect x="151" y="43.5" width="28" height=".6"/><rect x="151" y="46" width="30" height=".6"/><rect x="151" y="48.5" width="27" height=".6"/><rect x="151" y="51" width="31" height=".6"/><rect x="151" y="53.5" width="28" height=".6"/><rect x="151" y="56" width="20" height=".6"/><rect x="151" y="61" width="31" height=".6"/><rect x="151" y="63.5" width="31" height=".6"/><rect x="151" y="66" width="28" height=".6"/><rect x="151" y="68.5" width="30" height=".6"/><rect x="151" y="71" width="29" height=".6"/><rect x="151" y="75.5" width="30" height=".6"/><rect x="151" y="78" width="31" height=".6"/><rect x="151" y="80.5" width="29" height=".6"/><rect x="151" y="83" width="29" height=".6"/><rect x="151" y="85.5" width="28" height=".6"/></g>
<rect x="201" y="0" width="97" height="106" fill="#333231"/>
<rect x="185" y="10" width="26" height="84" fill="#1e1e1e"/><rect x="185" y="10" width="26" height="9" fill="#2a2220"/><path d="M188 11L190 18M194 11L196 18M200 11L202 18M206 11L208 18" stroke="#a08070" stroke-width="1.2"/><rect x="185" y="18" width="26" height="2" fill="#5a5a5a"/><g fill="#3a3a3a"><rect x="189" y="22" width="3" height="3"/><rect x="193" y="22" width="3" height="3"/><rect x="197" y="22" width="3" height="3"/><rect x="201" y="22" width="3" height="3"/></g><rect x="204" y="26" width="5" height="8" fill="#a07860"/><rect x="189" y="34" width="3" height="1.2" fill="#e07020"/><rect x="201" y="38" width="6" height="3" fill="#a8c0d8"/><rect x="201" y="43" width="4" height="1.2" fill="#e07020"/><g fill="#3a3a3a"><rect x="189" y="50" width="3" height="3"/><rect x="193" y="50" width="3" height="3"/><rect x="197" y="50" width="3" height="3"/><rect x="201" y="50" width="3" height="3"/></g><rect x="195" y="56" width="4" height="1.2" fill="#e07020"/><g fill="#6a5a50"><rect x="189" y="61" width="4" height="3"/><rect x="194" y="61" width="4" height="3"/><rect x="200" y="61" width="4" height="3"/></g><g fill="#b89070"><rect x="189" y="72" width="4" height="3"/><rect x="194" y="72" width="4" height="3"/><rect x="199" y="72" width="4" height="3"/><rect x="204" y="72" width="4" height="3"/></g><rect x="188" y="80" width="3" height="5" fill="#a06030"/><rect x="197" y="83" width="6" height="1.2" fill="#e07020"/><rect x="185" y="88" width="26" height="6" fill="#161616"/>
<rect x="217" y="20" width="71" height="42" rx="1.5" fill="#0a0a0a"/><rect x="219" y="22" width="67" height="34" fill="#141414"/><rect x="219" y="44" width="67" height="10" fill="#5a5a5a" opacity=".8"/><rect x="219" y="48" width="67" height="5" fill="#8a8a8a" opacity=".5"/><path d="M228 26L233 46M236 28L241 47M257 27L260 46M272 26L276 45" stroke="#c8a088" stroke-width="2.6" opacity=".85"/><path d="M229 26L232 40M258 28L259 40" stroke="#f0e0d0" stroke-width="1"/><rect x="220" y="42" width="65" height="2" fill="#d8d8d8" opacity=".7"/><rect x="224" y="45" width="8" height="1.5" fill="#e07020"/><rect x="219" y="56" width="67" height="1" fill="#2a2a2a"/>
<rect x="217" y="61" width="71" height="7" fill="#d4d4d4"/><circle cx="251" cy="64.5" r="1.2" fill="#444"/><path d="M246 68H258L260 78H244Z" fill="#c0c0c0"/><rect x="242" y="78" width="21" height="2" fill="#e0e0e0"/>
<rect x="272" y="55" width="21" height="28" rx="1.5" fill="#121212"/><rect x="274" y="57" width="17" height="8" fill="#4a3a34"/><rect x="283" y="67" width="5" height="6" fill="#a07860"/>
<text x="289" y="10.5" text-anchor="end" font-size="3.2" fill="#cfcfcf" font-family="Liberation Sans" textLength="21" lengthAdjust="spacingAndGlyphs">LE PROJET</text>
<text x="289" y="18" text-anchor="end" font-size="6.5" fill="#ececec" font-family="Liberation Sans" font-weight="bold" font-style="italic" textLength="56" lengthAdjust="spacingAndGlyphs">SITE WEB VITRINE</text>
<g fill="#d0d0d0" opacity=".7"><rect x="213" y="77" width="28" height=".7"/><rect x="213" y="80" width="27" height=".7"/><rect x="213" y="83" width="24" height=".7"/><rect x="213" y="86" width="16" height=".7"/><rect x="238" y="89.5" width="40" height=".6"/><rect x="238" y="92.5" width="51" height=".6"/></g>
</symbol>

<symbol id="s89" viewBox="0 0 298 106">
<rect width="298" height="106" fill="#333231"/>
<rect x="96" y="0" width="105" height="106" fill="#d9d9d9"/>
<rect x="2" y="22" width="46" height="35" fill="url(#gStudio)"/><rect x="2" y="22" width="46" height="10" fill="#1e1e28"/><ellipse cx="22" cy="32" rx="5" ry="3" fill="#f4f4f4"/><circle cx="15" cy="42" r="4" fill="#1a1a1a"/><circle cx="31" cy="37" r="3.5" fill="#1e1e1e"/>
<rect x="62" y="22" width="14" height="16" fill="#151515"/><path d="M68 25L72 36" stroke="#a86a50" stroke-width="1.5"/>
<rect x="50" y="40" width="26" height="17" fill="#5a6a66"/><rect x="50" y="52" width="26" height="5" fill="#b8a888"/><rect x="52" y="41" width="7" height="10" fill="#e8e8e8" opacity=".7"/>
<rect x="50" y="59" width="26" height="39" fill="#3a3a3a"/><rect x="66" y="60" width="9" height="30" fill="#7a7a7a"/><ellipse cx="58" cy="76" rx="4" ry="6" fill="#121212"/><rect x="52" y="88" width="22" height="10" fill="#8a8a8a"/>
<rect x="79" y="18" width="34" height="22" fill="#ececec"/><rect x="85" y="30" width="9" height="6" fill="#1a1a1a" transform="rotate(-20 90 33)"/><rect x="97" y="20" width="10" height="7" fill="#5a5a5a" transform="rotate(30 102 24)"/><rect x="108" y="18" width="5" height="22" fill="#8a8a8a"/>
<rect x="79" y="41" width="20" height="33" fill="#262626"/><rect x="79" y="43" width="20" height="6" fill="#6a6a6a"/><rect x="86" y="52" width="6" height="14" fill="#141414"/>
<rect x="79" y="76" width="34" height="22" fill="#16202a"/><path d="M84 94L87 82L90 92M101 94L106 82L108 92" stroke="#c88060" stroke-width="1.6" fill="none"/>
<text x="11" y="10.5" font-size="3.2" fill="#cfcfcf" font-family="Liberation Sans" textLength="21" lengthAdjust="spacingAndGlyphs">LE PROJET</text>
<text x="11" y="18" font-size="6.5" fill="#ececec" font-family="Liberation Sans" font-weight="bold" font-style="italic" textLength="57" lengthAdjust="spacingAndGlyphs">SHOOTING PHOTO</text>
<text x="11" y="72" font-size="5.6" fill="#f2f2f2" font-family="Liberation Sans" font-weight="bold" textLength="37" lengthAdjust="spacingAndGlyphs">Étape par étape</text>
<g fill="#c0c0c0" opacity=".75"><rect x="12" y="74.5" width="14" height=".6"/><rect x="12" y="78.5" width="17" height=".6"/><rect x="12" y="82.5" width="22" height=".6"/><rect x="12" y="86.5" width="13" height=".6"/><rect x="12" y="90.5" width="16" height=".6"/><rect x="12" y="94.5" width="11" height=".6"/></g>
<g fill="#8a8a8a" opacity=".8"><rect x="115" y="10" width="26" height=".6"/><rect x="115" y="12.5" width="31" height=".6"/><rect x="115" y="15" width="30" height=".6"/><rect x="115" y="17.5" width="27" height=".6"/><rect x="115" y="20" width="18" height=".6"/><rect x="115" y="25" width="26" height=".6"/><rect x="115" y="27.5" width="29" height=".6"/><rect x="115" y="30" width="30" height=".6"/><rect x="115" y="32.5" width="31" height=".6"/><rect x="115" y="35" width="30" height=".6"/><rect x="115" y="37.5" width="20" height=".6"/><rect x="115" y="42" width="30" height=".6"/><rect x="115" y="44.5" width="29" height=".6"/><rect x="115" y="47" width="30" height=".6"/><rect x="115" y="49.5" width="10" height=".6"/><rect x="115" y="54" width="26" height=".6"/><rect x="115" y="56.5" width="25" height=".6"/><rect x="115" y="59" width="25" height=".6"/><rect x="115" y="64" width="26" height=".6"/><rect x="115" y="66.5" width="22" height=".6"/><rect x="115" y="69" width="22" height=".6"/><rect x="115" y="74" width="30" height=".6"/><rect x="115" y="76.5" width="29" height=".6"/><rect x="115" y="79" width="29" height=".6"/><rect x="115" y="81.5" width="12" height=".6"/></g>
<rect x="149" y="0" width="1" height="106" fill="#999"/>
<g fill="#8a8a8a" opacity=".8"><rect x="151" y="10" width="31" height=".6"/><rect x="151" y="12.5" width="30" height=".6"/><rect x="151" y="15" width="30" height=".6"/><rect x="151" y="17.5" width="14" height=".6"/><rect x="151" y="22.5" width="30" height=".6"/><rect x="151" y="25" width="31" height=".6"/><rect x="151" y="27.5" width="30" height=".6"/><rect x="151" y="30" width="30" height=".6"/><rect x="151" y="32.5" width="29" height=".6"/><rect x="151" y="35" width="20" height=".6"/><rect x="151" y="39.5" width="29" height=".6"/><rect x="151" y="42" width="31" height=".6"/><rect x="151" y="44.5" width="30" height=".6"/><rect x="151" y="47" width="30" height=".6"/><rect x="151" y="49.5" width="28" height=".6"/><rect x="151" y="52" width="30" height=".6"/><rect x="151" y="54.5" width="31" height=".6"/><rect x="151" y="57" width="30" height=".6"/><rect x="151" y="59.5" width="29" height=".6"/><rect x="151" y="65" width="31" height=".6"/><rect x="151" y="67.5" width="31" height=".6"/><rect x="151" y="70" width="18" height=".6"/></g>
<rect x="201" y="0" width="97" height="106" fill="#333231"/>
<rect x="183" y="26" width="36" height="53" fill="url(#gCam)"/><rect x="186" y="44" width="18" height="22" fill="#141414" transform="rotate(-25 195 55)"/><rect x="190" y="46" width="8" height="4" fill="#8a8a8a" transform="rotate(-25 195 55)"/>
<rect x="198" y="81" width="21" height="13" fill="#4a3a24"/><rect x="204" y="84" width="7" height="6" fill="#8a7050"/>
<rect x="221" y="31" width="25" height="35" fill="#8a9080"/><rect x="221" y="31" width="25" height="10" fill="#c8c8c8"/><rect x="230" y="38" width="10" height="28" fill="#4a4a48"/><rect x="221" y="45" width="7" height="10" fill="#4a6a3a"/>
<rect x="221" y="68" width="37" height="26" fill="#2a2c2e"/><rect x="221" y="68" width="16" height="6" fill="#d8d4cc"/><rect x="239" y="68" width="17" height="6" fill="#d8d4cc"/><ellipse cx="232" cy="84" rx="6" ry="9" fill="#1a1c1e"/>
<rect x="261" y="68" width="28" height="17" fill="#1e1424"/><rect x="267" y="78" width="14" height="3" fill="#40d8a8"/><rect x="287" y="69" width="1" height="15" fill="#5a6aa8"/>
<text x="289" y="10.5" text-anchor="end" font-size="3.2" fill="#cfcfcf" font-family="Liberation Sans" textLength="21" lengthAdjust="spacingAndGlyphs">LE PROJET</text>
<text x="289" y="18" text-anchor="end" font-size="6.5" fill="#ececec" font-family="Liberation Sans" font-weight="bold" font-style="italic" textLength="63" lengthAdjust="spacingAndGlyphs">RÉALISATION VIDÉO</text>
<text x="247" y="36" font-size="5.6" fill="#f2f2f2" font-family="Liberation Sans" font-weight="bold" textLength="38" lengthAdjust="spacingAndGlyphs">Étape par étape</text>
<g fill="#c0c0c0" opacity=".75"><rect x="248" y="38.5" width="24" height=".7"/><rect x="248" y="42.5" width="30" height=".7"/><rect x="248" y="46.5" width="27" height=".7"/><rect x="248" y="50.5" width="23" height=".7"/><rect x="248" y="54.5" width="24" height=".7"/><rect x="248" y="58.5" width="11" height=".7"/></g>
</symbol>

<symbol id="s1011" viewBox="0 0 298 106">
<rect width="298" height="106" fill="#333231"/>
<rect x="11" y="1" width="95.5" height="101" fill="#2f2f2e"/>
<g stroke="#3c3c3b" stroke-width=".5"><path d="M11 8H106.5M11 22H106.5M11 39.3H106.5M11 54H106.5M11 72.3H106.5M11 86.4H106.5M76 1V102M88 1V102M106.5 1V102"/></g>
<g fill="#dcdcdc"><rect x="39" y="3.5" width="14" height="1"/><rect x="78" y="3.5" width="8" height="1"/><rect x="91" y="3" width="13" height="1"/><rect x="91" y="5" width="13" height="1"/><rect x="11" y="10" width="18" height="1"/><rect x="11" y="23" width="21" height="1"/><rect x="11" y="41.5" width="27" height="1"/><rect x="11" y="55" width="22" height="1"/><rect x="11" y="73.5" width="17" height="1"/><rect x="11" y="87" width="24" height="1"/></g>
<g fill="#8a8a8a" opacity=".8"><rect x="11" y="12.5" width="42" height=".6"/><rect x="11" y="15" width="37" height=".6"/><rect x="11" y="17.5" width="32" height=".6"/><rect x="11" y="25.5" width="42" height=".6"/><rect x="11" y="28" width="37" height=".6"/><rect x="11" y="30.5" width="32" height=".6"/><rect x="11" y="33" width="35" height=".6"/><rect x="11" y="44" width="42" height=".6"/><rect x="11" y="46.5" width="37" height=".6"/><rect x="11" y="49" width="34" height=".6"/><rect x="11" y="57.5" width="30" height=".6"/><rect x="11" y="60" width="37" height=".6"/><rect x="11" y="62.5" width="58" height=".6"/><rect x="11" y="65" width="50" height=".6"/><rect x="11" y="67.5" width="58" height=".6"/><rect x="11" y="76" width="23" height=".6"/><rect x="11" y="78.5" width="14" height=".6"/><rect x="11" y="81" width="29" height=".6"/><rect x="11" y="89.5" width="23" height=".6"/><rect x="11" y="92" width="14" height=".6"/><rect x="11" y="94.5" width="29" height=".6"/></g>
<g fill="#cfcfcf"><rect x="81.5" y="15" width="1.2" height="1.2"/><rect x="81.5" y="30" width="1.2" height="1.2"/><rect x="81.5" y="45" width="1.2" height="1.2"/><rect x="81.5" y="56" width="1.2" height="1.2"/><rect x="81.5" y="78" width="1.2" height="1.2"/><rect x="81.5" y="92" width="1.2" height="1.2"/><rect x="100" y="15" width="6" height="1"/><rect x="100" y="25" width="6" height="1"/><rect x="98" y="33" width="8" height="1"/><rect x="100" y="45" width="6" height="1"/><rect x="100" y="54" width="6" height="1"/><rect x="98" y="61" width="8" height="1"/><rect x="99" y="67" width="7" height="1"/><rect x="100" y="78" width="6" height="1"/><rect x="100" y="92" width="6" height="1"/></g>
<g fill="#a8a8a8" opacity=".7"><rect x="114" y="70" width="31" height=".6"/><rect x="114" y="72.5" width="30" height=".6"/><rect x="114" y="75" width="30" height=".6"/><rect x="114" y="77.5" width="27" height=".6"/><rect x="114" y="80" width="28" height=".6"/><rect x="114" y="82.5" width="28" height=".6"/><rect x="114" y="85" width="18" height=".6"/></g>
<rect x="149" y="0" width="1" height="106" fill="#999"/>
<path d="M158.8 21V12H165Q176.8 12 176.8 22.3Q176.8 32.6 165 32.6H163" stroke="#f4f4f4" stroke-width="2.6" fill="none"/><path d="M158.8 34V23L164.5 30.5L170.5 23.5" stroke="#f4f4f4" stroke-width="2.6" fill="none"/>
<text x="156" y="40" font-size="4.4" font-weight="bold" fill="#eeeeee" font-family="Liberation Sans" textLength="23" lengthAdjust="spacingAndGlyphs">MODERN</text>
<text x="156" y="44.5" font-size="4.4" font-weight="bold" fill="#eeeeee" font-family="Liberation Sans" textLength="23" lengthAdjust="spacingAndGlyphs">DESIGN</text>
<text x="180" y="60" font-size="15" fill="#666666" font-family="Liberation Sans" textLength="109" lengthAdjust="spacingAndGlyphs">www.modern-design.fr</text>
<text x="156" y="70" font-size="3" font-weight="bold" fill="#cfcfcf" font-family="Liberation Sans" textLength="14" lengthAdjust="spacingAndGlyphs">Ben Dollart</text>
<text x="156" y="77.6" font-size="7.5" font-weight="bold" fill="#e8e8e8" font-family="Liberation Sans" textLength="29" lengthAdjust="spacingAndGlyphs">06 78 21 57 32</text>
<circle cx="159.5" cy="86" r="3.1" fill="#cfcfcf"/><circle cx="159.5" cy="86" r="1.8" fill="none" stroke="#555" stroke-width=".5"/><circle cx="168.5" cy="86" r="3.1" fill="#f0f0f0"/><rect x="168" y="84" width="1" height="4.5" fill="#444"/>
<text x="173" y="88.5" font-size="6" fill="#8e8e8e" font-family="Liberation Sans" textLength="54" lengthAdjust="spacingAndGlyphs">contact@modern-design.fr</text>
</symbol>

<symbol id="p12" viewBox="0 0 149 106">
<rect width="149" height="106" fill="#333231"/>
<path d="M12.5 69V60.5H24Q37 60.5 37 77Q37 93 24 93H21" stroke="url(#gLogoD)" stroke-width="3.6" fill="none"/>
<path d="M12.5 94V75L18 86L27 72" stroke="url(#gLogoM)" stroke-width="3.6" fill="none"/>
</symbol>
</defs>
</svg>

<!-- page frames on canvas -->
<svg class="a" style="left:975px;top:153px" width="149" height="106"><use href="#p1" width="149" height="106"/></svg>
<div class="a" style="left:975px;top:153px;width:149px;height:106px;border-top:1px solid #8c8c8c;border-bottom:1px solid #8c8c8c;border-left:1px solid #8c8c8c;border-right:2px solid #5c5c5c"></div>
<svg class="a" style="left:826px;top:272px" width="298" height="106"><use href="#s23" width="298" height="106"/></svg>
<div class="a" style="left:826px;top:272px;width:298px;height:106px;border-top:1px solid #8c8c8c;border-bottom:1px solid #8c8c8c;border-left:2px solid #5c5c5c;border-right:2px solid #5c5c5c"></div>
<svg class="a" style="left:826px;top:392px" width="298" height="106"><use href="#s45" width="298" height="106"/></svg>
<div class="a" style="left:826px;top:392px;width:298px;height:106px;border-top:1px solid #8c8c8c;border-bottom:1px solid #8c8c8c;border-left:2px solid #5c5c5c;border-right:2px solid #5c5c5c"></div>
<svg class="a" style="left:826px;top:512px" width="298" height="106"><use href="#s67" width="298" height="106"/></svg>
<div class="a" style="left:826px;top:512px;width:298px;height:106px;border-top:1px solid #8c8c8c;border-bottom:1px solid #8c8c8c;border-left:2px solid #5c5c5c;border-right:2px solid #5c5c5c"></div>
<svg class="a" style="left:826px;top:631px" width="298" height="106"><use href="#s89" width="298" height="106"/></svg>
<div class="a" style="left:826px;top:631px;width:298px;height:106px;border-top:1px solid #8c8c8c;border-bottom:1px solid #8c8c8c;border-left:2px solid #5c5c5c;border-right:2px solid #5c5c5c"></div>
<svg class="a" style="left:826px;top:751px" width="298" height="106"><use href="#s1011" width="298" height="106"/></svg>
<div class="a" style="left:826px;top:751px;width:298px;height:106px;border-top:1px solid #8c8c8c;border-bottom:1px solid #8c8c8c;border-left:2px solid #5c5c5c;border-right:2px solid #5c5c5c"></div>
<svg class="a" style="left:826px;top:870px" width="149" height="106"><use href="#p12" width="149" height="106"/></svg>
<div class="a" style="left:826px;top:870px;width:150px;height:106px;border-top:1px solid #8c8c8c;border-bottom:1px solid #8c8c8c;border-left:2px solid #5c5c5c;border-right:1px solid #8c8c8c"></div>
<!-- RIGHT PANEL -->
<div class="a" style="left:1717px;top:80px;width:203px;height:951px;background:#2e2e2e"></div>
<!-- color panel -->
<div class="a" style="left:1718px;top:80px;width:202px;height:19px;background:#272727"></div>
<div class="a" style="left:1723px;top:85px;width:1px;height:8px;background:#5a5a5a"></div>
<div class="a" style="left:1726px;top:85px;width:1px;height:8px;background:#5a5a5a"></div>
<div class="a" style="left:1732px;top:82px;width:36px;height:17px;background:#3c3c3c"></div>
<div class="t" style="left:1735px;top:85px;font-size:9px;transform:scaleX(.89);transform-origin:0 0;color:#e8e8e8">Couleur</div>
<div class="t" style="left:1771px;top:85px;font-size:9px;transform:scaleX(.89);transform-origin:0 0;color:#c8c8c8">Échantillons</div>
<div class="t" style="left:1822px;top:85px;font-size:9px;transform:scaleX(.89);transform-origin:0 0;color:#c8c8c8">Trait</div>
<svg class="a" style="left:1908px;top:85px" width="10" height="8" viewBox="0 0 10 8"><rect x="0" y="1" width="7" height="5" fill="#d0d0d0"/><path d="M0 2.8H7M0 4.3H7" stroke="#8a8a8a" stroke-width=".5"/><rect x="8" y="6" width="1.5" height="1.5" fill="#e8e8e8"/></svg>
<div class="a" style="left:1718px;top:99px;width:202px;height:177px;background:#424242"></div>
<svg class="a" style="left:1726px;top:108px" width="70" height="36" viewBox="0 0 70 36"><circle cx="12.5" cy="12.5" r="6.5" fill="none" stroke="#353535" stroke-width="5"/><circle cx="12.5" cy="12.5" r="6.5" fill="none" stroke="#f4f4f4" stroke-width="3.8"/><path d="M16.3 5.5L18.6 7.9M6.4 17.1L8.7 19.5" stroke="#f03030" stroke-width="1.8"/><circle cx="22" cy="22" r="9" fill="#2e2e2e"/><circle cx="22" cy="22" r="8.3" fill="#ffffff"/><circle cx="8" cy="26" r="4.2" fill="#2a2a2a"/><circle cx="8" cy="26" r="3.4" fill="#f2f2f2"/><path d="M5.8 28.3L10.3 23.7" stroke="#f03030" stroke-width="1"/><path d="M22 4Q28 3 28.5 9M20.5 5.5L22.2 3.5L24 5M27 8L28.6 10L30 8" stroke="#b8b8b8" stroke-width=".9" fill="none"/><path d="M39.5 13L45.5 7L47 8.5L41 14.5Z" fill="#8a8a8a"/><path d="M39 15L40 13.5L41 14.5Z" fill="#ccc"/><circle cx="49" cy="5.5" r="2.7" fill="#c08a30"/><path d="M44.5 7.5L48 11" stroke="#a87020" stroke-width="1.6"/><circle cx="59" cy="8.5" r="5.2" fill="#f00000"/></svg>
<div class="a" style="left:1837px;top:128px;width:13px;height:14px;background:#2f2f2f"></div>
<svg class="a" style="left:1840px;top:131px" width="7" height="8" viewBox="0 0 7 8"><path d="M1.5 4V2.5Q1.5 .7 3.5 .7Q5.5 .7 5.5 2.5V4" fill="none" stroke="#aaa" stroke-width=".9"/><rect x=".5" y="3.8" width="6" height="4" fill="#aaa"/></svg>
<div class="a" style="left:1853px;top:128px;width:60px;height:14px;background:#383838;border:1px solid #333;border-radius:2px"></div>
<div class="t" style="left:1857px;top:130px;font-size:9px;transform:scaleX(.89);transform-origin:0 0;color:#e0e0e0">RVB</div>
<svg class="a" style="left:1904px;top:134px" width="5" height="3" viewBox="0 0 5 3"><path d="M0 0H5L2.5 3Z" fill="#ddd"/></svg>
<div class="t" style="left:1729px;top:148px;font-size:9px;transform:scaleX(.89);transform-origin:0 0;color:#c8c8c8">R:</div>
<div class="t" style="left:1729px;top:166px;font-size:9px;transform:scaleX(.89);transform-origin:0 0;color:#c8c8c8">V:</div>
<div class="t" style="left:1729px;top:184px;font-size:9px;transform:scaleX(.89);transform-origin:0 0;color:#c8c8c8">B:</div>
<div class="a" style="left:1738px;top:149px;width:139px;height:7px;border-radius:4px;background:linear-gradient(90deg,#40ffff,#ffffff);border:1px solid #222"></div>
<div class="a" style="left:1738px;top:167px;width:139px;height:7px;border-radius:4px;background:linear-gradient(90deg,#ff30ff,#ffffff);border:1px solid #222"></div>
<div class="a" style="left:1738px;top:185px;width:139px;height:7px;border-radius:4px;background:linear-gradient(90deg,#ffff30,#ffffff);border:1px solid #222"></div>
<svg class="a" style="left:1870px;top:147px" width="10" height="48" viewBox="0 0 10 48"><g fill="#fff" stroke="#999" stroke-width="1"><circle cx="5" cy="5.5" r="3.6"/><circle cx="5" cy="23.5" r="3.6"/><circle cx="5" cy="41.5" r="3.6"/></g></svg>
<div class="a" style="left:1883px;top:145px;width:30px;height:14px;background:#333;border-radius:2px;border-bottom:1px solid #4a4a4a"></div>
<div class="a" style="left:1883px;top:163px;width:30px;height:14px;background:#333;border-radius:2px;border-bottom:1px solid #4a4a4a"></div>
<div class="a" style="left:1883px;top:181px;width:30px;height:14px;background:#333;border-radius:2px;border-bottom:1px solid #4a4a4a"></div>
<div class="t" style="left:1887px;top:148px;font-size:9px;transform:scaleX(.89);transform-origin:0 0;color:#e0e0e0">255</div>
<div class="t" style="left:1887px;top:166px;font-size:9px;transform:scaleX(.89);transform-origin:0 0;color:#e0e0e0">255</div>
<div class="t" style="left:1887px;top:184px;font-size:9px;transform:scaleX(.89);transform-origin:0 0;color:#e0e0e0">255</div>
<div class="a" style="left:1728px;top:201px;width:185px;height:40px;border:1px solid #222;background:linear-gradient(180deg,rgba(255,255,255,1) 0%,rgba(255,255,255,0) 45%,rgba(0,0,0,0) 55%,rgba(0,0,0,1) 100%),linear-gradient(90deg,#ff0000 0%,#ffff00 17%,#00ff00 33%,#00ffff 50%,#0000ff 67%,#ff00ff 83%,#ff0000 100%)"></div>
<div class="t" style="left:1728px;top:245px;font-size:9px;transform:scaleX(.89);transform-origin:0 0;color:#d8d8d8">Opacité</div>
<div class="a" style="left:1733px;top:258px;width:9px;height:9px;border-radius:50%;background:#fff"></div>
<div class="a" style="left:1748px;top:260px;width:110px;height:6px;border-radius:3px;background:linear-gradient(90deg,rgba(245,245,245,.95),rgba(245,245,245,0)),repeating-conic-gradient(#707070 0 25%,#404040 0 50%) 0 0/7px 7px;border:1px solid #2e2e2e"></div>
<div class="a" style="left:1853px;top:259px;width:9px;height:9px;border-radius:50%;border:1px solid #eee;background:#3a3a3a"></div>
<div class="a" style="left:1865px;top:255px;width:46px;height:15px;background:#333;border-radius:2px"></div>
<div class="a" style="left:1898px;top:255px;width:1px;height:15px;background:#444"></div>
<div class="t" style="left:1869px;top:258px;font-size:9px;transform:scaleX(.89);transform-origin:0 0;color:#e0e0e0">100 %</div>
<svg class="a" style="left:1902px;top:261px" width="5" height="3" viewBox="0 0 5 3"><path d="M0 0H5L2.5 3Z" fill="#ddd"/></svg>
<!-- layers panel -->
<div class="a" style="left:1718px;top:276px;width:202px;height:17px;background:#272727"></div>
<div class="a" style="left:1723px;top:281px;width:1px;height:7px;background:#5a5a5a"></div>
<div class="a" style="left:1726px;top:281px;width:1px;height:7px;background:#5a5a5a"></div>
<div class="a" style="left:1732px;top:277px;width:36px;height:16px;background:#3c3c3c"></div>
<div class="t" style="left:1735px;top:280px;font-size:9px;transform:scaleX(.89);transform-origin:0 0;color:#e8e8e8">Calques</div>
<div class="t" style="left:1771px;top:280px;font-size:9px;transform:scaleX(.89);transform-origin:0 0;color:#c8c8c8">Caractère</div>
<div class="t" style="left:1813px;top:280px;font-size:9px;transform:scaleX(.89);transform-origin:0 0;color:#c8c8c8">Par</div>
<div class="t" style="left:1832px;top:280px;font-size:9px;transform:scaleX(.89);transform-origin:0 0;color:#c8c8c8">StT</div>
<svg class="a" style="left:1908px;top:281px" width="10" height="8" viewBox="0 0 10 8"><rect x="0" y="1" width="7" height="5" fill="#d0d0d0"/><path d="M0 2.8H7M0 4.3H7" stroke="#8a8a8a" stroke-width=".5"/><rect x="8" y="6" width="1.5" height="1.5" fill="#e8e8e8"/></svg>
<div class="a" style="left:1718px;top:293px;width:202px;height:23px;background:#3e3e3e"></div>
<div class="t" style="left:1724px;top:299px;font-size:9px;transform:scaleX(.89);transform-origin:0 0;color:#5e5e5e">Opacité</div>
<div class="a" style="left:1755px;top:297px;width:55px;height:15px;background:#3a3a3a;border:1px solid #353535;border-radius:3px"></div>
<div class="t" style="left:1759px;top:299px;font-size:9px;transform:scaleX(.89);transform-origin:0 0;color:#6a6a6a">100 %</div>
<svg class="a" style="left:1801px;top:303px" width="5" height="3" viewBox="0 0 5 3"><path d="M0 0H5L2.5 3Z" fill="#777"/></svg>
<div class="a" style="left:1814px;top:297px;width:70px;height:15px;background:#3a3a3a;border:1px solid #353535;border-radius:3px"></div>
<svg class="a" style="left:1876px;top:303px" width="5" height="3" viewBox="0 0 5 3"><path d="M0 0H5L2.5 3Z" fill="#777"/></svg>
<svg class="a" style="left:1888px;top:299px" width="10" height="10" viewBox="0 0 10 10"><g fill="#c8c8c8"><circle cx="5" cy="5" r="3.2"/><rect x="4.2" y="0" width="1.6" height="10"/><rect x="0" y="4.2" width="10" height="1.6"/><rect x="4.2" y="0" width="1.6" height="10" transform="rotate(45 5 5)"/><rect x="4.2" y="0" width="1.6" height="10" transform="rotate(-45 5 5)"/></g><circle cx="5" cy="5" r="1.4" fill="#3e3e3e"/></svg>
<svg class="a" style="left:1905px;top:299px" width="8" height="10" viewBox="0 0 8 10"><path d="M1.8 5V3Q1.8 .8 4 .8Q6.2 .8 6.2 3V5" fill="none" stroke="#c0c0c0" stroke-width="1.1"/><rect x=".8" y="4.6" width="6.4" height="5" fill="#c0c0c0"/></svg>
<div class="a" style="left:1718px;top:316px;width:202px;height:602px;background:#333333"></div>
<!-- rows -->
<div class="a" style="left:1718px;top:316px;width:189px;height:164px;background:#3a3a3a"></div>
<div class="a" style="left:1718px;top:338px;width:189px;height:2px;background:#151515"></div>
<div class="a" style="left:1718px;top:361px;width:189px;height:2px;background:#151515"></div>
<div class="a" style="left:1718px;top:385px;width:189px;height:2px;background:#151515"></div>
<div class="a" style="left:1718px;top:408px;width:189px;height:2px;background:#151515"></div>
<div class="a" style="left:1718px;top:431px;width:189px;height:2px;background:#151515"></div>
<div class="a" style="left:1718px;top:455px;width:189px;height:2px;background:#151515"></div>
<div class="a" style="left:1718px;top:478px;width:189px;height:2px;background:#151515"></div>
<!-- row 1 -->
<div class="a" style="left:1734px;top:317px;width:21px;height:21px;background:#2c2c2c;border:1px solid #0e0e0e"></div>
<svg class="a" style="left:1737px;top:320px" width="14" height="14" viewBox="0 0 14 14"><rect x=".5" y=".5" width="13" height="13" fill="#777" stroke="#aaa"/><rect x="2" y="2" width="10" height="10" fill="#d8d8d8"/><path d="M3.5 3.5H10.5V5M7 3.5V11M5.5 11H8.5" stroke="#111" stroke-width="1.4" fill="none"/></svg>
<div class="t" style="left:1758px;top:323px;font-size:9px;color:#cfcfcf">(Agence conseil en stratég)</div>
<!-- row 2 -->
<div class="a" style="left:1734px;top:340px;width:21px;height:21px;background:#2c2c2c;border:1px solid #0e0e0e"></div>
<div class="a" style="left:1738px;top:348px;width:1px;height:1px;background:#e04050"></div>
<div class="a" style="left:1739px;top:348px;width:12px;height:1px;background:#b8b8b8;opacity:.8"></div>
<div class="a" style="left:1741px;top:350px;width:10px;height:1px;background:#b8b8b8;opacity:.7"></div>
<div class="t" style="left:1758px;top:347px;font-size:9px;color:#f2f2f2;font-weight:bold">logo-md-texte-blancV2 <span style="font-weight:normal;color:#c8c8c8">(Ima...</span></div>
<!-- row 3 -->
<div class="a" style="left:1720px;top:366px;width:12px;height:14px;border-radius:50%;background:#333"></div>
<svg class="a" style="left:1722px;top:370px" width="8" height="6" viewBox="0 0 8 6"><path d="M0 0H8L4 6Z" fill="#dcdcdc"/></svg>
<div class="a" style="left:1734px;top:363px;width:21px;height:22px;background:#2c2c2c;border:1px solid #0e0e0e"></div>
<svg class="a" style="left:1735px;top:367px" width="8" height="14" viewBox="0 0 8 14"><path d="M1 1L5 3L2 6L6 8L1 10L5 13M5 3L6 8" stroke="#7a1a48" stroke-width=".6" fill="none"/></svg>
<div class="t" style="left:1758px;top:370px;font-size:9px;color:#f2f2f2;font-weight:bold">poly <span style="font-weight:normal;color:#c8c8c8">(Grouper)</span></div>
<!-- rows 4-6 -->
<div class="a" style="left:1742px;top:387px;width:20px;height:21px;background:#2c2c2c;border:1px solid #0e0e0e"></div>
<svg class="a" style="left:1744px;top:390px" width="6" height="13" viewBox="0 0 6 13"><path d="M1 1L4 3L1 6L5 8L1 11" stroke="#4a1a34" stroke-width=".6" fill="none"/></svg>
<div class="t" style="left:1766px;top:394px;font-size:9px;color:#f2f2f2;font-weight:bold">polygons <span style="font-weight:normal;color:#c8c8c8">(Image)</span></div>
<div class="a" style="left:1742px;top:410px;width:20px;height:21px;background:#2c2c2c;border:1px solid #0e0e0e"></div>
<svg class="a" style="left:1744px;top:413px" width="6" height="13" viewBox="0 0 6 13"><path d="M1 1L4 3L1 6L5 8L1 11" stroke="#4a1a34" stroke-width=".6" fill="none"/></svg>
<div class="t" style="left:1766px;top:417px;font-size:9px;color:#f2f2f2;font-weight:bold">polygons <span style="font-weight:normal;color:#c8c8c8">(Image)</span></div>
<div class="a" style="left:1742px;top:433px;width:20px;height:22px;background:#2c2c2c;border:1px solid #0e0e0e"></div>
<svg class="a" style="left:1744px;top:436px" width="6" height="13" viewBox="0 0 6 13"><path d="M1 1L4 3L1 6L5 8L1 11" stroke="#4a1a34" stroke-width=".6" fill="none"/></svg>
<div class="t" style="left:1766px;top:441px;font-size:9px;color:#f2f2f2;font-weight:bold">polygons <span style="font-weight:normal;color:#c8c8c8">(Image)</span></div>
<!-- row 7 -->
<div class="a" style="left:1718px;top:457px;width:2px;height:21px;background:#e86a10"></div>
<div class="a" style="left:1721px;top:461px;width:11px;height:13px;border-radius:50%;background:#333"></div>
<svg class="a" style="left:1723px;top:463px" width="7" height="8" viewBox="0 0 7 8"><path d="M0 0L7 4L0 8Z" fill="#dcdcdc"/></svg>
<div class="a" style="left:1734px;top:457px;width:21px;height:21px;background:#333231;border:1px solid #0e0e0e"></div>
<div class="t" style="left:1758px;top:464px;font-size:9px;color:#cfcfcf">(Planche type A)</div>
<!-- checkboxes -->
<svg class="a" style="left:1894px;top:321px" width="11" height="156" viewBox="0 0 11 156"><g fill="none" stroke="#bdbdbd" stroke-width="1"><rect x="1" y="1.5" width="8.5" height="8.5" rx="1.5"/><rect x="1" y="25" width="8.5" height="8.5" rx="1.5"/><rect x="1" y="48.5" width="8.5" height="8.5" rx="1.5"/><rect x="1" y="72" width="8.5" height="8.5" rx="1.5"/><rect x="1" y="95.5" width="8.5" height="8.5" rx="1.5"/><rect x="1" y="119" width="8.5" height="8.5" rx="1.5"/><rect x="1" y="142.5" width="8.5" height="8.5" rx="1.5"/></g><g fill="none" stroke="#e0e0e0" stroke-width="1"><path d="M3 6L4.8 8L8.5 2"/><path d="M3 29.5L4.8 31.5L8.5 25.5"/><path d="M3 53L4.8 55L8.5 49"/><path d="M3 76.5L4.8 78.5L8.5 72.5"/><path d="M3 100L4.8 102L8.5 96"/><path d="M3 123.5L4.8 125.5L8.5 119.5"/><path d="M3 147L4.8 149L8.5 143"/></g></svg>
<!-- layers footer -->
<div class="a" style="left:1718px;top:918px;width:202px;height:17px;background:#3a3a3a"></div>
<div class="a" style="left:1722px;top:919px;width:16px;height:15px;background:#2a2a2a"></div>
<svg class="a" style="left:1724px;top:921px" width="12" height="10" viewBox="0 0 12 10"><path d="M1 3L6 1L11 3L6 5Z M1 5L6 7L11 5 M1 7L6 9L11 7" fill="none" stroke="#d0d0d0" stroke-width="1"/></svg>
<div class="a" style="left:1791px;top:922px;width:11px;height:9px;background:#c8c8c8"></div>
<div class="a" style="left:1794px;top:924px;width:5px;height:5px;border-radius:50%;background:#3a3a3a"></div>
<svg class="a" style="left:1808px;top:921px" width="11" height="11" viewBox="0 0 11 11"><circle cx="5.5" cy="5.5" r="4.5" fill="none" stroke="#bbb" stroke-width="1"/><path d="M5.5 1A4.5 4.5 0 0 0 5.5 10Z" fill="#bbb"/><path d="M7 1L4 10" stroke="#3a3a3a" stroke-width=".8"/></svg>
<div class="t" style="left:1824px;top:920px;font-size:10px;color:#bbb;font-style:italic;font-family:'Liberation Serif',serif">fx</div>
<svg class="a" style="left:1888px;top:921px" width="9" height="11" viewBox="0 0 9 11"><path d="M.5 .5H5.5L8.5 3.5V10.5H.5Z M5.5 .5V3.5H8.5" fill="none" stroke="#bbb"/></svg>
<svg class="a" style="left:1905px;top:920px" width="9" height="12" viewBox="0 0 9 12"><path d="M.5 2.5H8.5M3 1H6M1.5 3V11.5H7.5V3M3.5 4.5V10M5.5 4.5V10" fill="none" stroke="#bbb"/></svg>
<!-- transform panel -->
<div class="a" style="left:1718px;top:935px;width:202px;height:18px;background:#272727"></div>
<div class="a" style="left:1723px;top:940px;width:1px;height:8px;background:#5a5a5a"></div>
<div class="a" style="left:1726px;top:940px;width:1px;height:8px;background:#5a5a5a"></div>
<div class="a" style="left:1732px;top:937px;width:50px;height:16px;background:#3c3c3c"></div>
<div class="t" style="left:1735px;top:939px;font-size:9px;transform:scaleX(.89);transform-origin:0 0;color:#e8e8e8">Transformer</div>
<div class="t" style="left:1787px;top:939px;font-size:9px;transform:scaleX(.89);transform-origin:0 0;color:#c8c8c8">Historique</div>
<div class="t" style="left:1831px;top:939px;font-size:9px;transform:scaleX(.89);transform-origin:0 0;color:#c8c8c8">Navigateur</div>
<div class="a" style="left:1718px;top:953px;width:202px;height:78px;background:#3e3e3e"></div>
<svg class="a" style="left:1734px;top:968px" width="28" height="28" viewBox="0 0 28 28"><rect x="3" y="3" width="22" height="22" fill="#6a6a6a"/><g fill="#6a6a6a"><rect x="0" y="0" width="5" height="5"/><rect x="11.5" y="0" width="5" height="5"/><rect x="23" y="0" width="5" height="5"/><rect x="0" y="11.5" width="5" height="5"/><rect x="23" y="11.5" width="5" height="5"/><rect x="0" y="23" width="5" height="5"/><rect x="11.5" y="23" width="5" height="5"/><rect x="23" y="23" width="5" height="5"/></g></svg>
<div class="t" style="left:1778px;top:965px;font-size:9px;transform:scaleX(.89);transform-origin:0 0;color:#5a5a5a">X:</div>
<div class="t" style="left:1778px;top:983px;font-size:9px;transform:scaleX(.89);transform-origin:0 0;color:#5a5a5a">Y:</div>
<div class="t" style="left:1778px;top:1005px;font-size:9px;transform:scaleX(.89);transform-origin:0 0;color:#5a5a5a">R:</div>
<div class="t" style="left:1847px;top:965px;font-size:9px;transform:scaleX(.89);transform-origin:0 0;color:#5a5a5a">L:</div>
<div class="t" style="left:1846px;top:983px;font-size:9px;transform:scaleX(.89);transform-origin:0 0;color:#5a5a5a">H:</div>
<div class="t" style="left:1847px;top:1005px;font-size:9px;transform:scaleX(.89);transform-origin:0 0;color:#5a5a5a">S:</div>
<div class="a" style="left:1787px;top:962px;width:49px;height:15px;background:#333;border:1px solid #2a2a2a;border-radius:2px"></div>
<div class="a" style="left:1787px;top:980px;width:49px;height:15px;background:#333;border:1px solid #2a2a2a;border-radius:2px"></div>
<div class="a" style="left:1787px;top:1003px;width:49px;height:15px;background:#333;border:1px solid #2a2a2a;border-radius:2px"></div>
<div class="a" style="left:1856px;top:962px;width:49px;height:15px;background:#333;border:1px solid #2a2a2a;border-radius:2px"></div>
<div class="a" style="left:1856px;top:980px;width:49px;height:15px;background:#333;border:1px solid #2a2a2a;border-radius:2px"></div>
<div class="a" style="left:1856px;top:1003px;width:49px;height:15px;background:#333;border:1px solid #2a2a2a;border-radius:2px"></div>
<div class="t" style="left:1791px;top:965px;font-size:9px;transform:scaleX(.89);transform-origin:0 0;color:#6e6e6e">0 mm</div>
<div class="t" style="left:1791px;top:983px;font-size:9px;transform:scaleX(.89);transform-origin:0 0;color:#6e6e6e">0 mm</div>
<div class="t" style="left:1791px;top:1005px;font-size:9px;transform:scaleX(.89);transform-origin:0 0;color:#6e6e6e">0 °</div>
<div class="t" style="left:1860px;top:965px;font-size:9px;transform:scaleX(.89);transform-origin:0 0;color:#6e6e6e">0 mm</div>
<div class="t" style="left:1860px;top:983px;font-size:9px;transform:scaleX(.89);transform-origin:0 0;color:#6e6e6e">0 mm</div>
<div class="t" style="left:1860px;top:1005px;font-size:9px;transform:scaleX(.89);transform-origin:0 0;color:#6e6e6e">0 °</div>
<svg class="a" style="left:1827px;top:1009px" width="5" height="3" viewBox="0 0 5 3"><path d="M0 0H5L2.5 3Z" fill="#888"/></svg>
<svg class="a" style="left:1896px;top:1009px" width="5" height="3" viewBox="0 0 5 3"><path d="M0 0H5L2.5 3Z" fill="#888"/></svg>
<svg class="a" style="left:1908px;top:972px" width="6" height="13" viewBox="0 0 6 13"><circle cx="3" cy="2.5" r="1.8" fill="none" stroke="#5a5a5a"/><circle cx="3" cy="10.5" r="1.8" fill="none" stroke="#5a5a5a"/><path d="M3 4V9" stroke="#5a5a5a"/></svg>
<!-- STATUS BAR -->
<div class="a" style="left:0;top:1031px;width:1920px;height:19px;background:#333333"></div>
<svg class="a" style="left:4px;top:1036px" width="10" height="9" viewBox="0 0 10 9"><path d="M1 0V9" stroke="#7a7a7a" stroke-width="1.2"/><path d="M9 0V9L2.5 4.5Z" fill="#7a7a7a"/></svg>
<svg class="a" style="left:19px;top:1036px" width="7" height="9" viewBox="0 0 7 9"><path d="M7 0V9L0 4.5Z" fill="#7a7a7a"/></svg>
<div class="t" style="left:45px;top:1036px;font-size:9px;transform:scaleX(.89);transform-origin:0 0;color:#e6e6e6">1 sur 12</div>
<svg class="a" style="left:92px;top:1036px" width="7" height="9" viewBox="0 0 7 9"><path d="M0 0V9L7 4.5Z" fill="#eeeeee"/></svg>
<svg class="a" style="left:105px;top:1036px" width="9" height="9" viewBox="0 0 9 9"><path d="M0 0V9L6.5 4.5Z" fill="#eeeeee"/><path d="M8 0V9" stroke="#eee" stroke-width="1.2"/></svg>
<svg class="a" style="left:119px;top:1035px" width="10" height="11" viewBox="0 0 10 11"><rect x="1" y=".5" width="8" height="10" fill="none" stroke="#bbb"/><path d="M2.5 3H7.5M2.5 5H7.5M2.5 7H7.5" stroke="#bbb" stroke-width=".8"/></svg>
<div class="t" style="left:136px;top:1037px;font-size:9px;color:#d8d8d8"><b style="color:#f4f4f4">Glisser</b> pour utiliser un cadre de sélection. <b style="color:#f4f4f4">Cliquer</b> sur un objet pour le sélectionner.</div>
<div class="a" style="left:0;top:1050px;width:1920px;height:3px;background:#111111"></div>
<div class="a" style="left:36px;top:1050px;width:258px;height:3px;background:#3a3a3a;border:1px solid #6a6a6a;border-bottom:none"></div>
<div class="a" style="left:518px;top:1050px;width:37px;height:3px;background:#3c3c3c"></div>
<div class="a" style="left:1915px;top:1050px;width:1px;height:3px;background:#aaa"></div>
</body></html>
